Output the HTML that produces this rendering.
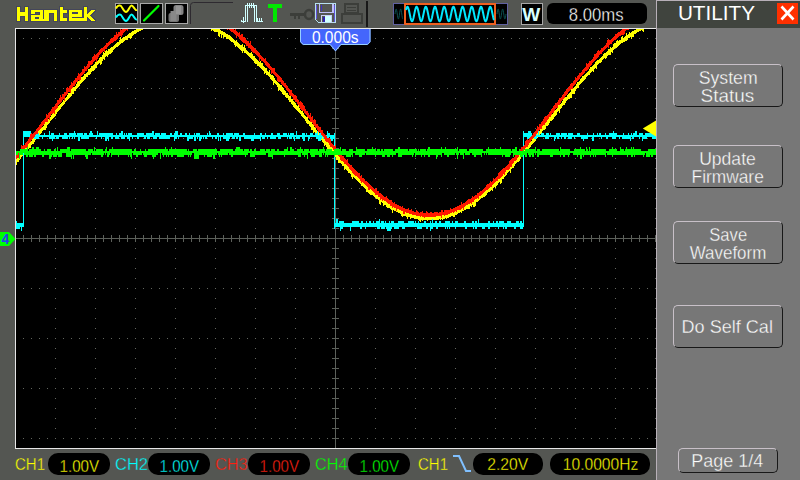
<!DOCTYPE html>
<html><head><meta charset="utf-8">
<style>
html,body{margin:0;padding:0;}
body{width:800px;height:480px;overflow:hidden;background:#545652;position:relative;font-family:"Liberation Sans",sans-serif;}
.a{position:absolute;}
.t{position:absolute;white-space:nowrap;line-height:1;}
svg{position:absolute;left:0;top:0;}
.pill{position:absolute;background:#000;border-radius:10px;}
.btn{position:absolute;left:673px;width:108px;border-style:solid;border-width:1px;border-color:#c8c0c8 #181818 #181818 #c8c0c8;border-radius:5px;color:#fff;text-align:center;font-size:17px;}
.btn span{position:absolute;left:0;right:0;text-align:center;line-height:1;}
</style></head>
<body>
<svg width="800" height="480" viewBox="0 0 800 480" shape-rendering="crispEdges">
  <!-- plot background -->
  <rect x="15" y="28" width="641" height="421" fill="#e6e6e6"/>
  <rect x="16" y="29" width="640" height="419" fill="#000"/>
  <path d="M23 38h1v1h-1zM31 38h1v1h-1zM39 38h1v1h-1zM47 38h1v1h-1zM55 38h1v1h-1zM63 38h1v1h-1zM71 38h1v1h-1zM79 38h1v1h-1zM87 38h1v1h-1zM95 38h1v1h-1zM103 38h1v1h-1zM111 38h1v1h-1zM119 38h1v1h-1zM127 38h1v1h-1zM135 38h1v1h-1zM143 38h1v1h-1zM151 38h1v1h-1zM159 38h1v1h-1zM167 38h1v1h-1zM175 38h1v1h-1zM183 38h1v1h-1zM191 38h1v1h-1zM199 38h1v1h-1zM207 38h1v1h-1zM215 38h1v1h-1zM223 38h1v1h-1zM231 38h1v1h-1zM239 38h1v1h-1zM247 38h1v1h-1zM255 38h1v1h-1zM263 38h1v1h-1zM271 38h1v1h-1zM279 38h1v1h-1zM287 38h1v1h-1zM295 38h1v1h-1zM303 38h1v1h-1zM311 38h1v1h-1zM319 38h1v1h-1zM327 38h1v1h-1zM335 38h1v1h-1zM343 38h1v1h-1zM351 38h1v1h-1zM359 38h1v1h-1zM367 38h1v1h-1zM375 38h1v1h-1zM383 38h1v1h-1zM391 38h1v1h-1zM399 38h1v1h-1zM407 38h1v1h-1zM415 38h1v1h-1zM423 38h1v1h-1zM431 38h1v1h-1zM439 38h1v1h-1zM447 38h1v1h-1zM455 38h1v1h-1zM463 38h1v1h-1zM471 38h1v1h-1zM479 38h1v1h-1zM487 38h1v1h-1zM495 38h1v1h-1zM503 38h1v1h-1zM511 38h1v1h-1zM519 38h1v1h-1zM527 38h1v1h-1zM535 38h1v1h-1zM543 38h1v1h-1zM551 38h1v1h-1zM559 38h1v1h-1zM567 38h1v1h-1zM575 38h1v1h-1zM583 38h1v1h-1zM591 38h1v1h-1zM599 38h1v1h-1zM607 38h1v1h-1zM615 38h1v1h-1zM623 38h1v1h-1zM631 38h1v1h-1zM639 38h1v1h-1zM647 38h1v1h-1zM655 38h1v1h-1zM23 88h1v1h-1zM31 88h1v1h-1zM39 88h1v1h-1zM47 88h1v1h-1zM55 88h1v1h-1zM63 88h1v1h-1zM71 88h1v1h-1zM79 88h1v1h-1zM87 88h1v1h-1zM95 88h1v1h-1zM103 88h1v1h-1zM111 88h1v1h-1zM119 88h1v1h-1zM127 88h1v1h-1zM135 88h1v1h-1zM143 88h1v1h-1zM151 88h1v1h-1zM159 88h1v1h-1zM167 88h1v1h-1zM175 88h1v1h-1zM183 88h1v1h-1zM191 88h1v1h-1zM199 88h1v1h-1zM207 88h1v1h-1zM215 88h1v1h-1zM223 88h1v1h-1zM231 88h1v1h-1zM239 88h1v1h-1zM247 88h1v1h-1zM255 88h1v1h-1zM263 88h1v1h-1zM271 88h1v1h-1zM279 88h1v1h-1zM287 88h1v1h-1zM295 88h1v1h-1zM303 88h1v1h-1zM311 88h1v1h-1zM319 88h1v1h-1zM327 88h1v1h-1zM335 88h1v1h-1zM343 88h1v1h-1zM351 88h1v1h-1zM359 88h1v1h-1zM367 88h1v1h-1zM375 88h1v1h-1zM383 88h1v1h-1zM391 88h1v1h-1zM399 88h1v1h-1zM407 88h1v1h-1zM415 88h1v1h-1zM423 88h1v1h-1zM431 88h1v1h-1zM439 88h1v1h-1zM447 88h1v1h-1zM455 88h1v1h-1zM463 88h1v1h-1zM471 88h1v1h-1zM479 88h1v1h-1zM487 88h1v1h-1zM495 88h1v1h-1zM503 88h1v1h-1zM511 88h1v1h-1zM519 88h1v1h-1zM527 88h1v1h-1zM535 88h1v1h-1zM543 88h1v1h-1zM551 88h1v1h-1zM559 88h1v1h-1zM567 88h1v1h-1zM575 88h1v1h-1zM583 88h1v1h-1zM591 88h1v1h-1zM599 88h1v1h-1zM607 88h1v1h-1zM615 88h1v1h-1zM623 88h1v1h-1zM631 88h1v1h-1zM639 88h1v1h-1zM647 88h1v1h-1zM655 88h1v1h-1zM23 138h1v1h-1zM31 138h1v1h-1zM39 138h1v1h-1zM47 138h1v1h-1zM55 138h1v1h-1zM63 138h1v1h-1zM71 138h1v1h-1zM79 138h1v1h-1zM87 138h1v1h-1zM95 138h1v1h-1zM103 138h1v1h-1zM111 138h1v1h-1zM119 138h1v1h-1zM127 138h1v1h-1zM135 138h1v1h-1zM143 138h1v1h-1zM151 138h1v1h-1zM159 138h1v1h-1zM167 138h1v1h-1zM175 138h1v1h-1zM183 138h1v1h-1zM191 138h1v1h-1zM199 138h1v1h-1zM207 138h1v1h-1zM215 138h1v1h-1zM223 138h1v1h-1zM231 138h1v1h-1zM239 138h1v1h-1zM247 138h1v1h-1zM255 138h1v1h-1zM263 138h1v1h-1zM271 138h1v1h-1zM279 138h1v1h-1zM287 138h1v1h-1zM295 138h1v1h-1zM303 138h1v1h-1zM311 138h1v1h-1zM319 138h1v1h-1zM327 138h1v1h-1zM335 138h1v1h-1zM343 138h1v1h-1zM351 138h1v1h-1zM359 138h1v1h-1zM367 138h1v1h-1zM375 138h1v1h-1zM383 138h1v1h-1zM391 138h1v1h-1zM399 138h1v1h-1zM407 138h1v1h-1zM415 138h1v1h-1zM423 138h1v1h-1zM431 138h1v1h-1zM439 138h1v1h-1zM447 138h1v1h-1zM455 138h1v1h-1zM463 138h1v1h-1zM471 138h1v1h-1zM479 138h1v1h-1zM487 138h1v1h-1zM495 138h1v1h-1zM503 138h1v1h-1zM511 138h1v1h-1zM519 138h1v1h-1zM527 138h1v1h-1zM535 138h1v1h-1zM543 138h1v1h-1zM551 138h1v1h-1zM559 138h1v1h-1zM567 138h1v1h-1zM575 138h1v1h-1zM583 138h1v1h-1zM591 138h1v1h-1zM599 138h1v1h-1zM607 138h1v1h-1zM615 138h1v1h-1zM623 138h1v1h-1zM631 138h1v1h-1zM639 138h1v1h-1zM647 138h1v1h-1zM655 138h1v1h-1zM23 188h1v1h-1zM31 188h1v1h-1zM39 188h1v1h-1zM47 188h1v1h-1zM55 188h1v1h-1zM63 188h1v1h-1zM71 188h1v1h-1zM79 188h1v1h-1zM87 188h1v1h-1zM95 188h1v1h-1zM103 188h1v1h-1zM111 188h1v1h-1zM119 188h1v1h-1zM127 188h1v1h-1zM135 188h1v1h-1zM143 188h1v1h-1zM151 188h1v1h-1zM159 188h1v1h-1zM167 188h1v1h-1zM175 188h1v1h-1zM183 188h1v1h-1zM191 188h1v1h-1zM199 188h1v1h-1zM207 188h1v1h-1zM215 188h1v1h-1zM223 188h1v1h-1zM231 188h1v1h-1zM239 188h1v1h-1zM247 188h1v1h-1zM255 188h1v1h-1zM263 188h1v1h-1zM271 188h1v1h-1zM279 188h1v1h-1zM287 188h1v1h-1zM295 188h1v1h-1zM303 188h1v1h-1zM311 188h1v1h-1zM319 188h1v1h-1zM327 188h1v1h-1zM335 188h1v1h-1zM343 188h1v1h-1zM351 188h1v1h-1zM359 188h1v1h-1zM367 188h1v1h-1zM375 188h1v1h-1zM383 188h1v1h-1zM391 188h1v1h-1zM399 188h1v1h-1zM407 188h1v1h-1zM415 188h1v1h-1zM423 188h1v1h-1zM431 188h1v1h-1zM439 188h1v1h-1zM447 188h1v1h-1zM455 188h1v1h-1zM463 188h1v1h-1zM471 188h1v1h-1zM479 188h1v1h-1zM487 188h1v1h-1zM495 188h1v1h-1zM503 188h1v1h-1zM511 188h1v1h-1zM519 188h1v1h-1zM527 188h1v1h-1zM535 188h1v1h-1zM543 188h1v1h-1zM551 188h1v1h-1zM559 188h1v1h-1zM567 188h1v1h-1zM575 188h1v1h-1zM583 188h1v1h-1zM591 188h1v1h-1zM599 188h1v1h-1zM607 188h1v1h-1zM615 188h1v1h-1zM623 188h1v1h-1zM631 188h1v1h-1zM639 188h1v1h-1zM647 188h1v1h-1zM655 188h1v1h-1zM23 238h1v1h-1zM31 238h1v1h-1zM39 238h1v1h-1zM47 238h1v1h-1zM55 238h1v1h-1zM63 238h1v1h-1zM71 238h1v1h-1zM79 238h1v1h-1zM87 238h1v1h-1zM95 238h1v1h-1zM103 238h1v1h-1zM111 238h1v1h-1zM119 238h1v1h-1zM127 238h1v1h-1zM135 238h1v1h-1zM143 238h1v1h-1zM151 238h1v1h-1zM159 238h1v1h-1zM167 238h1v1h-1zM175 238h1v1h-1zM183 238h1v1h-1zM191 238h1v1h-1zM199 238h1v1h-1zM207 238h1v1h-1zM215 238h1v1h-1zM223 238h1v1h-1zM231 238h1v1h-1zM239 238h1v1h-1zM247 238h1v1h-1zM255 238h1v1h-1zM263 238h1v1h-1zM271 238h1v1h-1zM279 238h1v1h-1zM287 238h1v1h-1zM295 238h1v1h-1zM303 238h1v1h-1zM311 238h1v1h-1zM319 238h1v1h-1zM327 238h1v1h-1zM335 238h1v1h-1zM343 238h1v1h-1zM351 238h1v1h-1zM359 238h1v1h-1zM367 238h1v1h-1zM375 238h1v1h-1zM383 238h1v1h-1zM391 238h1v1h-1zM399 238h1v1h-1zM407 238h1v1h-1zM415 238h1v1h-1zM423 238h1v1h-1zM431 238h1v1h-1zM439 238h1v1h-1zM447 238h1v1h-1zM455 238h1v1h-1zM463 238h1v1h-1zM471 238h1v1h-1zM479 238h1v1h-1zM487 238h1v1h-1zM495 238h1v1h-1zM503 238h1v1h-1zM511 238h1v1h-1zM519 238h1v1h-1zM527 238h1v1h-1zM535 238h1v1h-1zM543 238h1v1h-1zM551 238h1v1h-1zM559 238h1v1h-1zM567 238h1v1h-1zM575 238h1v1h-1zM583 238h1v1h-1zM591 238h1v1h-1zM599 238h1v1h-1zM607 238h1v1h-1zM615 238h1v1h-1zM623 238h1v1h-1zM631 238h1v1h-1zM639 238h1v1h-1zM647 238h1v1h-1zM655 238h1v1h-1zM23 288h1v1h-1zM31 288h1v1h-1zM39 288h1v1h-1zM47 288h1v1h-1zM55 288h1v1h-1zM63 288h1v1h-1zM71 288h1v1h-1zM79 288h1v1h-1zM87 288h1v1h-1zM95 288h1v1h-1zM103 288h1v1h-1zM111 288h1v1h-1zM119 288h1v1h-1zM127 288h1v1h-1zM135 288h1v1h-1zM143 288h1v1h-1zM151 288h1v1h-1zM159 288h1v1h-1zM167 288h1v1h-1zM175 288h1v1h-1zM183 288h1v1h-1zM191 288h1v1h-1zM199 288h1v1h-1zM207 288h1v1h-1zM215 288h1v1h-1zM223 288h1v1h-1zM231 288h1v1h-1zM239 288h1v1h-1zM247 288h1v1h-1zM255 288h1v1h-1zM263 288h1v1h-1zM271 288h1v1h-1zM279 288h1v1h-1zM287 288h1v1h-1zM295 288h1v1h-1zM303 288h1v1h-1zM311 288h1v1h-1zM319 288h1v1h-1zM327 288h1v1h-1zM335 288h1v1h-1zM343 288h1v1h-1zM351 288h1v1h-1zM359 288h1v1h-1zM367 288h1v1h-1zM375 288h1v1h-1zM383 288h1v1h-1zM391 288h1v1h-1zM399 288h1v1h-1zM407 288h1v1h-1zM415 288h1v1h-1zM423 288h1v1h-1zM431 288h1v1h-1zM439 288h1v1h-1zM447 288h1v1h-1zM455 288h1v1h-1zM463 288h1v1h-1zM471 288h1v1h-1zM479 288h1v1h-1zM487 288h1v1h-1zM495 288h1v1h-1zM503 288h1v1h-1zM511 288h1v1h-1zM519 288h1v1h-1zM527 288h1v1h-1zM535 288h1v1h-1zM543 288h1v1h-1zM551 288h1v1h-1zM559 288h1v1h-1zM567 288h1v1h-1zM575 288h1v1h-1zM583 288h1v1h-1zM591 288h1v1h-1zM599 288h1v1h-1zM607 288h1v1h-1zM615 288h1v1h-1zM623 288h1v1h-1zM631 288h1v1h-1zM639 288h1v1h-1zM647 288h1v1h-1zM655 288h1v1h-1zM23 338h1v1h-1zM31 338h1v1h-1zM39 338h1v1h-1zM47 338h1v1h-1zM55 338h1v1h-1zM63 338h1v1h-1zM71 338h1v1h-1zM79 338h1v1h-1zM87 338h1v1h-1zM95 338h1v1h-1zM103 338h1v1h-1zM111 338h1v1h-1zM119 338h1v1h-1zM127 338h1v1h-1zM135 338h1v1h-1zM143 338h1v1h-1zM151 338h1v1h-1zM159 338h1v1h-1zM167 338h1v1h-1zM175 338h1v1h-1zM183 338h1v1h-1zM191 338h1v1h-1zM199 338h1v1h-1zM207 338h1v1h-1zM215 338h1v1h-1zM223 338h1v1h-1zM231 338h1v1h-1zM239 338h1v1h-1zM247 338h1v1h-1zM255 338h1v1h-1zM263 338h1v1h-1zM271 338h1v1h-1zM279 338h1v1h-1zM287 338h1v1h-1zM295 338h1v1h-1zM303 338h1v1h-1zM311 338h1v1h-1zM319 338h1v1h-1zM327 338h1v1h-1zM335 338h1v1h-1zM343 338h1v1h-1zM351 338h1v1h-1zM359 338h1v1h-1zM367 338h1v1h-1zM375 338h1v1h-1zM383 338h1v1h-1zM391 338h1v1h-1zM399 338h1v1h-1zM407 338h1v1h-1zM415 338h1v1h-1zM423 338h1v1h-1zM431 338h1v1h-1zM439 338h1v1h-1zM447 338h1v1h-1zM455 338h1v1h-1zM463 338h1v1h-1zM471 338h1v1h-1zM479 338h1v1h-1zM487 338h1v1h-1zM495 338h1v1h-1zM503 338h1v1h-1zM511 338h1v1h-1zM519 338h1v1h-1zM527 338h1v1h-1zM535 338h1v1h-1zM543 338h1v1h-1zM551 338h1v1h-1zM559 338h1v1h-1zM567 338h1v1h-1zM575 338h1v1h-1zM583 338h1v1h-1zM591 338h1v1h-1zM599 338h1v1h-1zM607 338h1v1h-1zM615 338h1v1h-1zM623 338h1v1h-1zM631 338h1v1h-1zM639 338h1v1h-1zM647 338h1v1h-1zM655 338h1v1h-1zM23 388h1v1h-1zM31 388h1v1h-1zM39 388h1v1h-1zM47 388h1v1h-1zM55 388h1v1h-1zM63 388h1v1h-1zM71 388h1v1h-1zM79 388h1v1h-1zM87 388h1v1h-1zM95 388h1v1h-1zM103 388h1v1h-1zM111 388h1v1h-1zM119 388h1v1h-1zM127 388h1v1h-1zM135 388h1v1h-1zM143 388h1v1h-1zM151 388h1v1h-1zM159 388h1v1h-1zM167 388h1v1h-1zM175 388h1v1h-1zM183 388h1v1h-1zM191 388h1v1h-1zM199 388h1v1h-1zM207 388h1v1h-1zM215 388h1v1h-1zM223 388h1v1h-1zM231 388h1v1h-1zM239 388h1v1h-1zM247 388h1v1h-1zM255 388h1v1h-1zM263 388h1v1h-1zM271 388h1v1h-1zM279 388h1v1h-1zM287 388h1v1h-1zM295 388h1v1h-1zM303 388h1v1h-1zM311 388h1v1h-1zM319 388h1v1h-1zM327 388h1v1h-1zM335 388h1v1h-1zM343 388h1v1h-1zM351 388h1v1h-1zM359 388h1v1h-1zM367 388h1v1h-1zM375 388h1v1h-1zM383 388h1v1h-1zM391 388h1v1h-1zM399 388h1v1h-1zM407 388h1v1h-1zM415 388h1v1h-1zM423 388h1v1h-1zM431 388h1v1h-1zM439 388h1v1h-1zM447 388h1v1h-1zM455 388h1v1h-1zM463 388h1v1h-1zM471 388h1v1h-1zM479 388h1v1h-1zM487 388h1v1h-1zM495 388h1v1h-1zM503 388h1v1h-1zM511 388h1v1h-1zM519 388h1v1h-1zM527 388h1v1h-1zM535 388h1v1h-1zM543 388h1v1h-1zM551 388h1v1h-1zM559 388h1v1h-1zM567 388h1v1h-1zM575 388h1v1h-1zM583 388h1v1h-1zM591 388h1v1h-1zM599 388h1v1h-1zM607 388h1v1h-1zM615 388h1v1h-1zM623 388h1v1h-1zM631 388h1v1h-1zM639 388h1v1h-1zM647 388h1v1h-1zM655 388h1v1h-1zM23 438h1v1h-1zM31 438h1v1h-1zM39 438h1v1h-1zM47 438h1v1h-1zM55 438h1v1h-1zM63 438h1v1h-1zM71 438h1v1h-1zM79 438h1v1h-1zM87 438h1v1h-1zM95 438h1v1h-1zM103 438h1v1h-1zM111 438h1v1h-1zM119 438h1v1h-1zM127 438h1v1h-1zM135 438h1v1h-1zM143 438h1v1h-1zM151 438h1v1h-1zM159 438h1v1h-1zM167 438h1v1h-1zM175 438h1v1h-1zM183 438h1v1h-1zM191 438h1v1h-1zM199 438h1v1h-1zM207 438h1v1h-1zM215 438h1v1h-1zM223 438h1v1h-1zM231 438h1v1h-1zM239 438h1v1h-1zM247 438h1v1h-1zM255 438h1v1h-1zM263 438h1v1h-1zM271 438h1v1h-1zM279 438h1v1h-1zM287 438h1v1h-1zM295 438h1v1h-1zM303 438h1v1h-1zM311 438h1v1h-1zM319 438h1v1h-1zM327 438h1v1h-1zM335 438h1v1h-1zM343 438h1v1h-1zM351 438h1v1h-1zM359 438h1v1h-1zM367 438h1v1h-1zM375 438h1v1h-1zM383 438h1v1h-1zM391 438h1v1h-1zM399 438h1v1h-1zM407 438h1v1h-1zM415 438h1v1h-1zM423 438h1v1h-1zM431 438h1v1h-1zM439 438h1v1h-1zM447 438h1v1h-1zM455 438h1v1h-1zM463 438h1v1h-1zM471 438h1v1h-1zM479 438h1v1h-1zM487 438h1v1h-1zM495 438h1v1h-1zM503 438h1v1h-1zM511 438h1v1h-1zM519 438h1v1h-1zM527 438h1v1h-1zM535 438h1v1h-1zM543 438h1v1h-1zM551 438h1v1h-1zM559 438h1v1h-1zM567 438h1v1h-1zM575 438h1v1h-1zM583 438h1v1h-1zM591 438h1v1h-1zM599 438h1v1h-1zM607 438h1v1h-1zM615 438h1v1h-1zM623 438h1v1h-1zM631 438h1v1h-1zM639 438h1v1h-1zM647 438h1v1h-1zM655 438h1v1h-1zM55 38h1v1h-1zM55 48h1v1h-1zM55 58h1v1h-1zM55 68h1v1h-1zM55 78h1v1h-1zM55 88h1v1h-1zM55 98h1v1h-1zM55 108h1v1h-1zM55 118h1v1h-1zM55 128h1v1h-1zM55 138h1v1h-1zM55 148h1v1h-1zM55 158h1v1h-1zM55 168h1v1h-1zM55 178h1v1h-1zM55 188h1v1h-1zM55 198h1v1h-1zM55 208h1v1h-1zM55 218h1v1h-1zM55 228h1v1h-1zM55 238h1v1h-1zM55 248h1v1h-1zM55 258h1v1h-1zM55 268h1v1h-1zM55 278h1v1h-1zM55 288h1v1h-1zM55 298h1v1h-1zM55 308h1v1h-1zM55 318h1v1h-1zM55 328h1v1h-1zM55 338h1v1h-1zM55 348h1v1h-1zM55 358h1v1h-1zM55 368h1v1h-1zM55 378h1v1h-1zM55 388h1v1h-1zM55 398h1v1h-1zM55 408h1v1h-1zM55 418h1v1h-1zM55 428h1v1h-1zM55 438h1v1h-1zM95 38h1v1h-1zM95 48h1v1h-1zM95 58h1v1h-1zM95 68h1v1h-1zM95 78h1v1h-1zM95 88h1v1h-1zM95 98h1v1h-1zM95 108h1v1h-1zM95 118h1v1h-1zM95 128h1v1h-1zM95 138h1v1h-1zM95 148h1v1h-1zM95 158h1v1h-1zM95 168h1v1h-1zM95 178h1v1h-1zM95 188h1v1h-1zM95 198h1v1h-1zM95 208h1v1h-1zM95 218h1v1h-1zM95 228h1v1h-1zM95 238h1v1h-1zM95 248h1v1h-1zM95 258h1v1h-1zM95 268h1v1h-1zM95 278h1v1h-1zM95 288h1v1h-1zM95 298h1v1h-1zM95 308h1v1h-1zM95 318h1v1h-1zM95 328h1v1h-1zM95 338h1v1h-1zM95 348h1v1h-1zM95 358h1v1h-1zM95 368h1v1h-1zM95 378h1v1h-1zM95 388h1v1h-1zM95 398h1v1h-1zM95 408h1v1h-1zM95 418h1v1h-1zM95 428h1v1h-1zM95 438h1v1h-1zM135 38h1v1h-1zM135 48h1v1h-1zM135 58h1v1h-1zM135 68h1v1h-1zM135 78h1v1h-1zM135 88h1v1h-1zM135 98h1v1h-1zM135 108h1v1h-1zM135 118h1v1h-1zM135 128h1v1h-1zM135 138h1v1h-1zM135 148h1v1h-1zM135 158h1v1h-1zM135 168h1v1h-1zM135 178h1v1h-1zM135 188h1v1h-1zM135 198h1v1h-1zM135 208h1v1h-1zM135 218h1v1h-1zM135 228h1v1h-1zM135 238h1v1h-1zM135 248h1v1h-1zM135 258h1v1h-1zM135 268h1v1h-1zM135 278h1v1h-1zM135 288h1v1h-1zM135 298h1v1h-1zM135 308h1v1h-1zM135 318h1v1h-1zM135 328h1v1h-1zM135 338h1v1h-1zM135 348h1v1h-1zM135 358h1v1h-1zM135 368h1v1h-1zM135 378h1v1h-1zM135 388h1v1h-1zM135 398h1v1h-1zM135 408h1v1h-1zM135 418h1v1h-1zM135 428h1v1h-1zM135 438h1v1h-1zM175 38h1v1h-1zM175 48h1v1h-1zM175 58h1v1h-1zM175 68h1v1h-1zM175 78h1v1h-1zM175 88h1v1h-1zM175 98h1v1h-1zM175 108h1v1h-1zM175 118h1v1h-1zM175 128h1v1h-1zM175 138h1v1h-1zM175 148h1v1h-1zM175 158h1v1h-1zM175 168h1v1h-1zM175 178h1v1h-1zM175 188h1v1h-1zM175 198h1v1h-1zM175 208h1v1h-1zM175 218h1v1h-1zM175 228h1v1h-1zM175 238h1v1h-1zM175 248h1v1h-1zM175 258h1v1h-1zM175 268h1v1h-1zM175 278h1v1h-1zM175 288h1v1h-1zM175 298h1v1h-1zM175 308h1v1h-1zM175 318h1v1h-1zM175 328h1v1h-1zM175 338h1v1h-1zM175 348h1v1h-1zM175 358h1v1h-1zM175 368h1v1h-1zM175 378h1v1h-1zM175 388h1v1h-1zM175 398h1v1h-1zM175 408h1v1h-1zM175 418h1v1h-1zM175 428h1v1h-1zM175 438h1v1h-1zM215 38h1v1h-1zM215 48h1v1h-1zM215 58h1v1h-1zM215 68h1v1h-1zM215 78h1v1h-1zM215 88h1v1h-1zM215 98h1v1h-1zM215 108h1v1h-1zM215 118h1v1h-1zM215 128h1v1h-1zM215 138h1v1h-1zM215 148h1v1h-1zM215 158h1v1h-1zM215 168h1v1h-1zM215 178h1v1h-1zM215 188h1v1h-1zM215 198h1v1h-1zM215 208h1v1h-1zM215 218h1v1h-1zM215 228h1v1h-1zM215 238h1v1h-1zM215 248h1v1h-1zM215 258h1v1h-1zM215 268h1v1h-1zM215 278h1v1h-1zM215 288h1v1h-1zM215 298h1v1h-1zM215 308h1v1h-1zM215 318h1v1h-1zM215 328h1v1h-1zM215 338h1v1h-1zM215 348h1v1h-1zM215 358h1v1h-1zM215 368h1v1h-1zM215 378h1v1h-1zM215 388h1v1h-1zM215 398h1v1h-1zM215 408h1v1h-1zM215 418h1v1h-1zM215 428h1v1h-1zM215 438h1v1h-1zM255 38h1v1h-1zM255 48h1v1h-1zM255 58h1v1h-1zM255 68h1v1h-1zM255 78h1v1h-1zM255 88h1v1h-1zM255 98h1v1h-1zM255 108h1v1h-1zM255 118h1v1h-1zM255 128h1v1h-1zM255 138h1v1h-1zM255 148h1v1h-1zM255 158h1v1h-1zM255 168h1v1h-1zM255 178h1v1h-1zM255 188h1v1h-1zM255 198h1v1h-1zM255 208h1v1h-1zM255 218h1v1h-1zM255 228h1v1h-1zM255 238h1v1h-1zM255 248h1v1h-1zM255 258h1v1h-1zM255 268h1v1h-1zM255 278h1v1h-1zM255 288h1v1h-1zM255 298h1v1h-1zM255 308h1v1h-1zM255 318h1v1h-1zM255 328h1v1h-1zM255 338h1v1h-1zM255 348h1v1h-1zM255 358h1v1h-1zM255 368h1v1h-1zM255 378h1v1h-1zM255 388h1v1h-1zM255 398h1v1h-1zM255 408h1v1h-1zM255 418h1v1h-1zM255 428h1v1h-1zM255 438h1v1h-1zM295 38h1v1h-1zM295 48h1v1h-1zM295 58h1v1h-1zM295 68h1v1h-1zM295 78h1v1h-1zM295 88h1v1h-1zM295 98h1v1h-1zM295 108h1v1h-1zM295 118h1v1h-1zM295 128h1v1h-1zM295 138h1v1h-1zM295 148h1v1h-1zM295 158h1v1h-1zM295 168h1v1h-1zM295 178h1v1h-1zM295 188h1v1h-1zM295 198h1v1h-1zM295 208h1v1h-1zM295 218h1v1h-1zM295 228h1v1h-1zM295 238h1v1h-1zM295 248h1v1h-1zM295 258h1v1h-1zM295 268h1v1h-1zM295 278h1v1h-1zM295 288h1v1h-1zM295 298h1v1h-1zM295 308h1v1h-1zM295 318h1v1h-1zM295 328h1v1h-1zM295 338h1v1h-1zM295 348h1v1h-1zM295 358h1v1h-1zM295 368h1v1h-1zM295 378h1v1h-1zM295 388h1v1h-1zM295 398h1v1h-1zM295 408h1v1h-1zM295 418h1v1h-1zM295 428h1v1h-1zM295 438h1v1h-1zM335 38h1v1h-1zM335 48h1v1h-1zM335 58h1v1h-1zM335 68h1v1h-1zM335 78h1v1h-1zM335 88h1v1h-1zM335 98h1v1h-1zM335 108h1v1h-1zM335 118h1v1h-1zM335 128h1v1h-1zM335 138h1v1h-1zM335 148h1v1h-1zM335 158h1v1h-1zM335 168h1v1h-1zM335 178h1v1h-1zM335 188h1v1h-1zM335 198h1v1h-1zM335 208h1v1h-1zM335 218h1v1h-1zM335 228h1v1h-1zM335 238h1v1h-1zM335 248h1v1h-1zM335 258h1v1h-1zM335 268h1v1h-1zM335 278h1v1h-1zM335 288h1v1h-1zM335 298h1v1h-1zM335 308h1v1h-1zM335 318h1v1h-1zM335 328h1v1h-1zM335 338h1v1h-1zM335 348h1v1h-1zM335 358h1v1h-1zM335 368h1v1h-1zM335 378h1v1h-1zM335 388h1v1h-1zM335 398h1v1h-1zM335 408h1v1h-1zM335 418h1v1h-1zM335 428h1v1h-1zM335 438h1v1h-1zM375 38h1v1h-1zM375 48h1v1h-1zM375 58h1v1h-1zM375 68h1v1h-1zM375 78h1v1h-1zM375 88h1v1h-1zM375 98h1v1h-1zM375 108h1v1h-1zM375 118h1v1h-1zM375 128h1v1h-1zM375 138h1v1h-1zM375 148h1v1h-1zM375 158h1v1h-1zM375 168h1v1h-1zM375 178h1v1h-1zM375 188h1v1h-1zM375 198h1v1h-1zM375 208h1v1h-1zM375 218h1v1h-1zM375 228h1v1h-1zM375 238h1v1h-1zM375 248h1v1h-1zM375 258h1v1h-1zM375 268h1v1h-1zM375 278h1v1h-1zM375 288h1v1h-1zM375 298h1v1h-1zM375 308h1v1h-1zM375 318h1v1h-1zM375 328h1v1h-1zM375 338h1v1h-1zM375 348h1v1h-1zM375 358h1v1h-1zM375 368h1v1h-1zM375 378h1v1h-1zM375 388h1v1h-1zM375 398h1v1h-1zM375 408h1v1h-1zM375 418h1v1h-1zM375 428h1v1h-1zM375 438h1v1h-1zM415 38h1v1h-1zM415 48h1v1h-1zM415 58h1v1h-1zM415 68h1v1h-1zM415 78h1v1h-1zM415 88h1v1h-1zM415 98h1v1h-1zM415 108h1v1h-1zM415 118h1v1h-1zM415 128h1v1h-1zM415 138h1v1h-1zM415 148h1v1h-1zM415 158h1v1h-1zM415 168h1v1h-1zM415 178h1v1h-1zM415 188h1v1h-1zM415 198h1v1h-1zM415 208h1v1h-1zM415 218h1v1h-1zM415 228h1v1h-1zM415 238h1v1h-1zM415 248h1v1h-1zM415 258h1v1h-1zM415 268h1v1h-1zM415 278h1v1h-1zM415 288h1v1h-1zM415 298h1v1h-1zM415 308h1v1h-1zM415 318h1v1h-1zM415 328h1v1h-1zM415 338h1v1h-1zM415 348h1v1h-1zM415 358h1v1h-1zM415 368h1v1h-1zM415 378h1v1h-1zM415 388h1v1h-1zM415 398h1v1h-1zM415 408h1v1h-1zM415 418h1v1h-1zM415 428h1v1h-1zM415 438h1v1h-1zM455 38h1v1h-1zM455 48h1v1h-1zM455 58h1v1h-1zM455 68h1v1h-1zM455 78h1v1h-1zM455 88h1v1h-1zM455 98h1v1h-1zM455 108h1v1h-1zM455 118h1v1h-1zM455 128h1v1h-1zM455 138h1v1h-1zM455 148h1v1h-1zM455 158h1v1h-1zM455 168h1v1h-1zM455 178h1v1h-1zM455 188h1v1h-1zM455 198h1v1h-1zM455 208h1v1h-1zM455 218h1v1h-1zM455 228h1v1h-1zM455 238h1v1h-1zM455 248h1v1h-1zM455 258h1v1h-1zM455 268h1v1h-1zM455 278h1v1h-1zM455 288h1v1h-1zM455 298h1v1h-1zM455 308h1v1h-1zM455 318h1v1h-1zM455 328h1v1h-1zM455 338h1v1h-1zM455 348h1v1h-1zM455 358h1v1h-1zM455 368h1v1h-1zM455 378h1v1h-1zM455 388h1v1h-1zM455 398h1v1h-1zM455 408h1v1h-1zM455 418h1v1h-1zM455 428h1v1h-1zM455 438h1v1h-1zM495 38h1v1h-1zM495 48h1v1h-1zM495 58h1v1h-1zM495 68h1v1h-1zM495 78h1v1h-1zM495 88h1v1h-1zM495 98h1v1h-1zM495 108h1v1h-1zM495 118h1v1h-1zM495 128h1v1h-1zM495 138h1v1h-1zM495 148h1v1h-1zM495 158h1v1h-1zM495 168h1v1h-1zM495 178h1v1h-1zM495 188h1v1h-1zM495 198h1v1h-1zM495 208h1v1h-1zM495 218h1v1h-1zM495 228h1v1h-1zM495 238h1v1h-1zM495 248h1v1h-1zM495 258h1v1h-1zM495 268h1v1h-1zM495 278h1v1h-1zM495 288h1v1h-1zM495 298h1v1h-1zM495 308h1v1h-1zM495 318h1v1h-1zM495 328h1v1h-1zM495 338h1v1h-1zM495 348h1v1h-1zM495 358h1v1h-1zM495 368h1v1h-1zM495 378h1v1h-1zM495 388h1v1h-1zM495 398h1v1h-1zM495 408h1v1h-1zM495 418h1v1h-1zM495 428h1v1h-1zM495 438h1v1h-1zM535 38h1v1h-1zM535 48h1v1h-1zM535 58h1v1h-1zM535 68h1v1h-1zM535 78h1v1h-1zM535 88h1v1h-1zM535 98h1v1h-1zM535 108h1v1h-1zM535 118h1v1h-1zM535 128h1v1h-1zM535 138h1v1h-1zM535 148h1v1h-1zM535 158h1v1h-1zM535 168h1v1h-1zM535 178h1v1h-1zM535 188h1v1h-1zM535 198h1v1h-1zM535 208h1v1h-1zM535 218h1v1h-1zM535 228h1v1h-1zM535 238h1v1h-1zM535 248h1v1h-1zM535 258h1v1h-1zM535 268h1v1h-1zM535 278h1v1h-1zM535 288h1v1h-1zM535 298h1v1h-1zM535 308h1v1h-1zM535 318h1v1h-1zM535 328h1v1h-1zM535 338h1v1h-1zM535 348h1v1h-1zM535 358h1v1h-1zM535 368h1v1h-1zM535 378h1v1h-1zM535 388h1v1h-1zM535 398h1v1h-1zM535 408h1v1h-1zM535 418h1v1h-1zM535 428h1v1h-1zM535 438h1v1h-1zM575 38h1v1h-1zM575 48h1v1h-1zM575 58h1v1h-1zM575 68h1v1h-1zM575 78h1v1h-1zM575 88h1v1h-1zM575 98h1v1h-1zM575 108h1v1h-1zM575 118h1v1h-1zM575 128h1v1h-1zM575 138h1v1h-1zM575 148h1v1h-1zM575 158h1v1h-1zM575 168h1v1h-1zM575 178h1v1h-1zM575 188h1v1h-1zM575 198h1v1h-1zM575 208h1v1h-1zM575 218h1v1h-1zM575 228h1v1h-1zM575 238h1v1h-1zM575 248h1v1h-1zM575 258h1v1h-1zM575 268h1v1h-1zM575 278h1v1h-1zM575 288h1v1h-1zM575 298h1v1h-1zM575 308h1v1h-1zM575 318h1v1h-1zM575 328h1v1h-1zM575 338h1v1h-1zM575 348h1v1h-1zM575 358h1v1h-1zM575 368h1v1h-1zM575 378h1v1h-1zM575 388h1v1h-1zM575 398h1v1h-1zM575 408h1v1h-1zM575 418h1v1h-1zM575 428h1v1h-1zM575 438h1v1h-1zM615 38h1v1h-1zM615 48h1v1h-1zM615 58h1v1h-1zM615 68h1v1h-1zM615 78h1v1h-1zM615 88h1v1h-1zM615 98h1v1h-1zM615 108h1v1h-1zM615 118h1v1h-1zM615 128h1v1h-1zM615 138h1v1h-1zM615 148h1v1h-1zM615 158h1v1h-1zM615 168h1v1h-1zM615 178h1v1h-1zM615 188h1v1h-1zM615 198h1v1h-1zM615 208h1v1h-1zM615 218h1v1h-1zM615 228h1v1h-1zM615 238h1v1h-1zM615 248h1v1h-1zM615 258h1v1h-1zM615 268h1v1h-1zM615 278h1v1h-1zM615 288h1v1h-1zM615 298h1v1h-1zM615 308h1v1h-1zM615 318h1v1h-1zM615 328h1v1h-1zM615 338h1v1h-1zM615 348h1v1h-1zM615 358h1v1h-1zM615 368h1v1h-1zM615 378h1v1h-1zM615 388h1v1h-1zM615 398h1v1h-1zM615 408h1v1h-1zM615 418h1v1h-1zM615 428h1v1h-1zM615 438h1v1h-1zM655 38h1v1h-1zM655 48h1v1h-1zM655 58h1v1h-1zM655 68h1v1h-1zM655 78h1v1h-1zM655 88h1v1h-1zM655 98h1v1h-1zM655 108h1v1h-1zM655 118h1v1h-1zM655 128h1v1h-1zM655 138h1v1h-1zM655 148h1v1h-1zM655 158h1v1h-1zM655 168h1v1h-1zM655 178h1v1h-1zM655 188h1v1h-1zM655 198h1v1h-1zM655 208h1v1h-1zM655 218h1v1h-1zM655 228h1v1h-1zM655 238h1v1h-1zM655 248h1v1h-1zM655 258h1v1h-1zM655 268h1v1h-1zM655 278h1v1h-1zM655 288h1v1h-1zM655 298h1v1h-1zM655 308h1v1h-1zM655 318h1v1h-1zM655 328h1v1h-1zM655 338h1v1h-1zM655 348h1v1h-1zM655 358h1v1h-1zM655 368h1v1h-1zM655 378h1v1h-1zM655 388h1v1h-1zM655 398h1v1h-1zM655 408h1v1h-1zM655 418h1v1h-1zM655 428h1v1h-1zM655 438h1v1h-1z" fill="#62665f"/>
  <path d="M335 29h1v419h-1zM16 238h640v1h-640zM332 38h7v1h-7zM332 48h7v1h-7zM332 58h7v1h-7zM332 68h7v1h-7zM332 78h7v1h-7zM332 88h7v1h-7zM332 98h7v1h-7zM332 108h7v1h-7zM332 118h7v1h-7zM332 128h7v1h-7zM332 138h7v1h-7zM332 148h7v1h-7zM332 158h7v1h-7zM332 168h7v1h-7zM332 178h7v1h-7zM332 188h7v1h-7zM332 198h7v1h-7zM332 208h7v1h-7zM332 218h7v1h-7zM332 228h7v1h-7zM332 238h7v1h-7zM332 248h7v1h-7zM332 258h7v1h-7zM332 268h7v1h-7zM332 278h7v1h-7zM332 288h7v1h-7zM332 298h7v1h-7zM332 308h7v1h-7zM332 318h7v1h-7zM332 328h7v1h-7zM332 338h7v1h-7zM332 348h7v1h-7zM332 358h7v1h-7zM332 368h7v1h-7zM332 378h7v1h-7zM332 388h7v1h-7zM332 398h7v1h-7zM332 408h7v1h-7zM332 418h7v1h-7zM332 428h7v1h-7zM332 438h7v1h-7zM23 235h1v7h-1zM31 235h1v7h-1zM39 235h1v7h-1zM47 235h1v7h-1zM55 235h1v7h-1zM63 235h1v7h-1zM71 235h1v7h-1zM79 235h1v7h-1zM87 235h1v7h-1zM95 235h1v7h-1zM103 235h1v7h-1zM111 235h1v7h-1zM119 235h1v7h-1zM127 235h1v7h-1zM135 235h1v7h-1zM143 235h1v7h-1zM151 235h1v7h-1zM159 235h1v7h-1zM167 235h1v7h-1zM175 235h1v7h-1zM183 235h1v7h-1zM191 235h1v7h-1zM199 235h1v7h-1zM207 235h1v7h-1zM215 235h1v7h-1zM223 235h1v7h-1zM231 235h1v7h-1zM239 235h1v7h-1zM247 235h1v7h-1zM255 235h1v7h-1zM263 235h1v7h-1zM271 235h1v7h-1zM279 235h1v7h-1zM287 235h1v7h-1zM295 235h1v7h-1zM303 235h1v7h-1zM311 235h1v7h-1zM319 235h1v7h-1zM327 235h1v7h-1zM335 235h1v7h-1zM343 235h1v7h-1zM351 235h1v7h-1zM359 235h1v7h-1zM367 235h1v7h-1zM375 235h1v7h-1zM383 235h1v7h-1zM391 235h1v7h-1zM399 235h1v7h-1zM407 235h1v7h-1zM415 235h1v7h-1zM423 235h1v7h-1zM431 235h1v7h-1zM439 235h1v7h-1zM447 235h1v7h-1zM455 235h1v7h-1zM463 235h1v7h-1zM471 235h1v7h-1zM479 235h1v7h-1zM487 235h1v7h-1zM495 235h1v7h-1zM503 235h1v7h-1zM511 235h1v7h-1zM519 235h1v7h-1zM527 235h1v7h-1zM535 235h1v7h-1zM543 235h1v7h-1zM551 235h1v7h-1zM559 235h1v7h-1zM567 235h1v7h-1zM575 235h1v7h-1zM583 235h1v7h-1zM591 235h1v7h-1zM599 235h1v7h-1zM607 235h1v7h-1zM615 235h1v7h-1zM623 235h1v7h-1zM631 235h1v7h-1zM639 235h1v7h-1zM647 235h1v7h-1zM655 235h1v7h-1z" fill="#5c605a"/>
  <path d="M16 159h1v6h-1zM17 158h1v4h-1zM18 155h1v7h-1zM19 152h1v8h-1zM20 154h1v5h-1zM21 153h1v4h-1zM22 152h1v4h-1zM23 147h1v8h-1zM24 146h1v8h-1zM25 146h1v8h-1zM26 147h1v4h-1zM27 146h1v4h-1zM28 144h1v5h-1zM29 143h1v5h-1zM30 141h1v7h-1zM31 141h1v4h-1zM32 138h1v6h-1zM33 138h1v6h-1zM34 136h1v6h-1zM35 136h1v4h-1zM36 134h1v5h-1zM37 133h1v6h-1zM38 130h1v8h-1zM39 129h1v7h-1zM40 127h1v7h-1zM41 128h1v5h-1zM42 127h1v4h-1zM43 126h1v4h-1zM44 124h1v6h-1zM45 122h1v8h-1zM46 122h1v6h-1zM47 120h1v5h-1zM48 119h1v5h-1zM49 118h1v5h-1zM50 117h1v4h-1zM51 115h1v5h-1zM52 114h1v5h-1zM53 111h1v7h-1zM54 111h1v6h-1zM55 110h1v6h-1zM56 109h1v5h-1zM57 108h1v4h-1zM58 106h1v5h-1zM59 105h1v5h-1zM60 104h1v5h-1zM61 103h1v4h-1zM62 102h1v4h-1zM63 100h1v5h-1zM64 97h1v7h-1zM65 98h1v4h-1zM66 97h1v4h-1zM67 95h1v5h-1zM68 93h1v6h-1zM69 93h1v5h-1zM70 92h1v5h-1zM71 88h1v8h-1zM72 87h1v7h-1zM73 87h1v7h-1zM74 87h1v4h-1zM75 86h1v5h-1zM76 84h1v5h-1zM77 82h1v6h-1zM78 81h1v6h-1zM79 81h1v5h-1zM80 80h1v4h-1zM81 77h1v6h-1zM82 77h1v5h-1zM83 76h1v5h-1zM84 74h1v6h-1zM85 74h1v5h-1zM86 73h1v4h-1zM87 72h1v5h-1zM88 69h1v6h-1zM89 69h1v6h-1zM90 68h1v6h-1zM91 66h1v6h-1zM92 66h1v5h-1zM93 65h1v6h-1zM94 64h1v6h-1zM95 62h1v6h-1zM96 61h1v7h-1zM97 61h1v4h-1zM98 60h1v4h-1zM99 58h1v5h-1zM100 57h1v8h-1zM101 57h1v7h-1zM102 55h1v6h-1zM103 52h1v7h-1zM104 53h1v7h-1zM105 51h1v6h-1zM106 50h1v6h-1zM107 51h1v6h-1zM108 49h1v6h-1zM109 49h1v5h-1zM110 48h1v6h-1zM111 47h1v6h-1zM112 47h1v5h-1zM113 46h1v4h-1zM114 45h1v4h-1zM115 44h1v4h-1zM116 43h1v4h-1zM117 42h1v5h-1zM118 42h1v4h-1zM119 40h1v5h-1zM120 37h1v7h-1zM121 39h1v4h-1zM122 38h1v5h-1zM123 37h1v5h-1zM124 37h1v4h-1zM125 36h1v4h-1zM126 36h1v4h-1zM127 35h1v5h-1zM128 34h1v4h-1zM129 33h1v5h-1zM130 33h1v6h-1zM131 32h1v6h-1zM132 31h1v5h-1zM133 31h1v4h-1zM134 30h1v4h-1zM135 30h1v4h-1zM136 29h1v4h-1zM137 29h1v3h-1zM138 29h1v3h-1zM139 29h1v2h-1zM140 29h1v2h-1zM141 29h1v1h-1zM142 29h1v1h-1zM211 29h1v2h-1zM212 29h1v1h-1zM213 29h1v2h-1zM214 29h1v3h-1zM215 29h1v3h-1zM216 29h1v3h-1zM217 29h1v3h-1zM218 29h1v7h-1zM219 29h1v8h-1zM220 30h1v4h-1zM221 31h1v7h-1zM222 31h1v4h-1zM223 32h1v6h-1zM224 32h1v5h-1zM225 33h1v4h-1zM226 34h1v5h-1zM227 34h1v5h-1zM228 35h1v4h-1zM229 35h1v5h-1zM230 36h1v5h-1zM231 37h1v5h-1zM232 38h1v4h-1zM233 39h1v4h-1zM234 40h1v5h-1zM235 41h1v6h-1zM236 40h1v6h-1zM237 42h1v5h-1zM238 43h1v5h-1zM239 44h1v5h-1zM240 45h1v5h-1zM241 45h1v6h-1zM242 44h1v9h-1zM243 47h1v4h-1zM244 45h1v8h-1zM245 48h1v5h-1zM246 50h1v4h-1zM247 51h1v4h-1zM248 52h1v4h-1zM249 53h1v4h-1zM250 53h1v5h-1zM251 52h1v7h-1zM252 54h1v6h-1zM253 56h1v5h-1zM254 56h1v7h-1zM255 58h1v6h-1zM256 59h1v5h-1zM257 60h1v6h-1zM258 61h1v5h-1zM259 62h1v5h-1zM260 61h1v7h-1zM261 63h1v6h-1zM262 63h1v7h-1zM263 66h1v5h-1zM264 67h1v7h-1zM265 68h1v5h-1zM266 68h1v7h-1zM267 71h1v4h-1zM268 72h1v4h-1zM269 70h1v7h-1zM270 74h1v5h-1zM271 75h1v5h-1zM272 75h1v6h-1zM273 76h1v9h-1zM274 78h1v5h-1zM275 80h1v4h-1zM276 81h1v4h-1zM277 82h1v5h-1zM278 83h1v8h-1zM279 84h1v6h-1zM280 85h1v6h-1zM281 85h1v7h-1zM282 87h1v7h-1zM283 88h1v7h-1zM284 90h1v5h-1zM285 91h1v6h-1zM286 93h1v5h-1zM287 93h1v5h-1zM288 95h1v5h-1zM289 96h1v6h-1zM290 96h1v6h-1zM291 99h1v5h-1zM292 99h1v6h-1zM293 101h1v6h-1zM294 102h1v6h-1zM295 103h1v6h-1zM296 105h1v5h-1zM297 106h1v5h-1zM298 105h1v7h-1zM299 108h1v5h-1zM300 110h1v4h-1zM301 111h1v5h-1zM302 110h1v7h-1zM303 113h1v5h-1zM304 115h1v4h-1zM305 116h1v5h-1zM306 117h1v6h-1zM307 117h1v7h-1zM308 120h1v4h-1zM309 121h1v5h-1zM310 121h1v6h-1zM311 122h1v8h-1zM312 124h1v6h-1zM313 125h1v8h-1zM314 127h1v5h-1zM315 128h1v6h-1zM316 130h1v4h-1zM317 131h1v6h-1zM318 131h1v6h-1zM319 133h1v5h-1zM320 132h1v7h-1zM321 135h1v5h-1zM322 137h1v5h-1zM323 138h1v5h-1zM324 139h1v7h-1zM325 141h1v4h-1zM326 142h1v5h-1zM327 142h1v9h-1zM328 143h1v6h-1zM329 145h1v7h-1zM330 147h1v4h-1zM331 146h1v7h-1zM332 147h1v8h-1zM333 150h1v5h-1zM334 151h1v8h-1zM335 153h1v4h-1zM336 153h1v7h-1zM337 155h1v5h-1zM338 156h1v7h-1zM339 157h1v6h-1zM340 159h1v4h-1zM341 160h1v4h-1zM342 161h1v5h-1zM343 161h1v5h-1zM344 163h1v7h-1zM345 164h1v5h-1zM346 165h1v5h-1zM347 166h1v5h-1zM348 167h1v6h-1zM349 168h1v5h-1zM350 169h1v5h-1zM351 170h1v7h-1zM352 172h1v7h-1zM353 173h1v4h-1zM354 174h1v4h-1zM355 175h1v4h-1zM356 176h1v4h-1zM357 177h1v4h-1zM358 175h1v7h-1zM359 179h1v4h-1zM360 180h1v4h-1zM361 181h1v5h-1zM362 182h1v4h-1zM363 183h1v4h-1zM364 184h1v4h-1zM365 185h1v4h-1zM366 185h1v7h-1zM367 186h1v6h-1zM368 186h1v7h-1zM369 186h1v8h-1zM370 189h1v6h-1zM371 189h1v6h-1zM372 190h1v5h-1zM373 192h1v4h-1zM374 193h1v4h-1zM375 193h1v5h-1zM376 194h1v5h-1zM377 192h1v7h-1zM378 196h1v4h-1zM379 197h1v7h-1zM380 198h1v7h-1zM381 197h1v5h-1zM382 199h1v4h-1zM383 199h1v7h-1zM384 200h1v5h-1zM385 199h1v6h-1zM386 202h1v5h-1zM387 203h1v5h-1zM388 203h1v5h-1zM389 202h1v6h-1zM390 204h1v5h-1zM391 205h1v5h-1zM392 206h1v7h-1zM393 206h1v4h-1zM394 207h1v4h-1zM395 207h1v4h-1zM396 208h1v4h-1zM397 208h1v4h-1zM398 209h1v4h-1zM399 209h1v4h-1zM400 210h1v4h-1zM401 209h1v7h-1zM402 210h1v7h-1zM403 210h1v6h-1zM404 212h1v4h-1zM405 211h1v5h-1zM406 212h1v5h-1zM407 213h1v6h-1zM408 213h1v4h-1zM409 213h1v4h-1zM410 213h1v6h-1zM411 211h1v7h-1zM412 213h1v5h-1zM413 214h1v4h-1zM414 214h1v5h-1zM415 215h1v4h-1zM416 216h1v3h-1zM417 214h1v5h-1zM418 216h1v4h-1zM419 216h1v5h-1zM420 216h1v6h-1zM421 216h1v4h-1zM422 217h1v4h-1zM423 217h1v3h-1zM424 217h1v3h-1zM425 214h1v6h-1zM426 217h1v3h-1zM427 216h1v5h-1zM428 217h1v3h-1zM429 217h1v3h-1zM430 217h1v3h-1zM431 217h1v3h-1zM432 217h1v3h-1zM433 217h1v3h-1zM434 217h1v3h-1zM435 216h1v4h-1zM436 216h1v4h-1zM437 214h1v6h-1zM438 216h1v4h-1zM439 215h1v4h-1zM440 216h1v4h-1zM441 215h1v4h-1zM442 214h1v6h-1zM443 215h1v4h-1zM444 215h1v4h-1zM445 214h1v4h-1zM446 214h1v5h-1zM447 214h1v4h-1zM448 211h1v7h-1zM449 211h1v6h-1zM450 213h1v4h-1zM451 212h1v4h-1zM452 212h1v4h-1zM453 212h1v5h-1zM454 211h1v6h-1zM455 211h1v4h-1zM456 208h1v7h-1zM457 210h1v4h-1zM458 209h1v4h-1zM459 209h1v4h-1zM460 208h1v4h-1zM461 208h1v5h-1zM462 207h1v4h-1zM463 207h1v4h-1zM464 206h1v4h-1zM465 204h1v6h-1zM466 205h1v4h-1zM467 203h1v6h-1zM468 202h1v7h-1zM469 201h1v8h-1zM470 200h1v6h-1zM471 202h1v5h-1zM472 200h1v5h-1zM473 199h1v8h-1zM474 200h1v7h-1zM475 199h1v7h-1zM476 198h1v4h-1zM477 197h1v5h-1zM478 197h1v4h-1zM479 195h1v5h-1zM480 194h1v5h-1zM481 194h1v4h-1zM482 192h1v6h-1zM483 193h1v4h-1zM484 192h1v5h-1zM485 191h1v5h-1zM486 190h1v5h-1zM487 189h1v4h-1zM488 187h1v5h-1zM489 187h1v5h-1zM490 184h1v7h-1zM491 185h1v5h-1zM492 182h1v9h-1zM493 182h1v6h-1zM494 181h1v6h-1zM495 182h1v6h-1zM496 180h1v6h-1zM497 180h1v5h-1zM498 178h1v5h-1zM499 177h1v5h-1zM500 176h1v8h-1zM501 175h1v8h-1zM502 174h1v5h-1zM503 173h1v6h-1zM504 172h1v5h-1zM505 171h1v5h-1zM506 169h1v6h-1zM507 168h1v5h-1zM508 167h1v5h-1zM509 166h1v5h-1zM510 166h1v7h-1zM511 165h1v4h-1zM512 162h1v6h-1zM513 161h1v7h-1zM514 159h1v7h-1zM515 160h1v4h-1zM516 159h1v4h-1zM517 158h1v4h-1zM518 156h1v6h-1zM519 155h1v6h-1zM520 154h1v5h-1zM521 153h1v4h-1zM522 149h1v8h-1zM523 150h1v6h-1zM524 149h1v5h-1zM525 148h1v5h-1zM526 146h1v5h-1zM527 146h1v4h-1zM528 144h1v5h-1zM529 143h1v5h-1zM530 140h1v7h-1zM531 141h1v4h-1zM532 138h1v6h-1zM533 138h1v5h-1zM534 136h1v6h-1zM535 136h1v5h-1zM536 134h1v5h-1zM537 133h1v5h-1zM538 132h1v5h-1zM539 131h1v4h-1zM540 129h1v5h-1zM541 127h1v6h-1zM542 126h1v5h-1zM543 125h1v5h-1zM544 123h1v7h-1zM545 122h1v7h-1zM546 122h1v4h-1zM547 119h1v7h-1zM548 118h1v7h-1zM549 117h1v6h-1zM550 116h1v5h-1zM551 115h1v6h-1zM552 114h1v6h-1zM553 113h1v6h-1zM554 111h1v6h-1zM555 110h1v6h-1zM556 109h1v6h-1zM557 105h1v7h-1zM558 104h1v7h-1zM559 105h1v8h-1zM560 104h1v5h-1zM561 103h1v5h-1zM562 101h1v5h-1zM563 99h1v6h-1zM564 97h1v8h-1zM565 97h1v6h-1zM566 97h1v4h-1zM567 95h1v5h-1zM568 94h1v5h-1zM569 93h1v6h-1zM570 92h1v6h-1zM571 89h1v9h-1zM572 89h1v5h-1zM573 88h1v6h-1zM574 87h1v7h-1zM575 86h1v5h-1zM576 84h1v5h-1zM577 82h1v6h-1zM578 82h1v6h-1zM579 81h1v4h-1zM580 79h1v5h-1zM581 78h1v5h-1zM582 76h1v6h-1zM583 76h1v5h-1zM584 75h1v5h-1zM585 74h1v5h-1zM586 73h1v4h-1zM587 72h1v4h-1zM588 71h1v4h-1zM589 69h1v6h-1zM590 67h1v6h-1zM591 67h1v5h-1zM592 66h1v5h-1zM593 65h1v7h-1zM594 64h1v5h-1zM595 62h1v6h-1zM596 61h1v8h-1zM597 60h1v5h-1zM598 60h1v4h-1zM599 59h1v4h-1zM600 58h1v5h-1zM601 57h1v5h-1zM602 56h1v4h-1zM603 54h1v5h-1zM604 53h1v5h-1zM605 53h1v6h-1zM606 52h1v6h-1zM607 51h1v5h-1zM608 49h1v6h-1zM609 49h1v6h-1zM610 47h1v8h-1zM611 48h1v4h-1zM612 47h1v6h-1zM613 44h1v6h-1zM614 43h1v6h-1zM615 43h1v5h-1zM616 41h1v7h-1zM617 40h1v7h-1zM618 41h1v5h-1zM619 40h1v5h-1zM620 40h1v4h-1zM621 37h1v6h-1zM622 36h1v7h-1zM623 38h1v4h-1zM624 37h1v5h-1zM625 36h1v5h-1zM626 33h1v8h-1zM627 35h1v5h-1zM628 34h1v4h-1zM629 32h1v6h-1zM630 33h1v4h-1zM631 32h1v7h-1zM632 31h1v6h-1zM633 31h1v6h-1zM634 30h1v4h-1zM635 30h1v4h-1zM636 29h1v4h-1zM637 29h1v3h-1zM638 29h1v3h-1zM639 29h1v2h-1zM640 29h1v2h-1zM641 29h1v1h-1zM642 29h1v2h-1zM643 29h1v3h-1z" fill="#ffff00"/>
  <path d="M24 131h1v6h-1zM25 131h1v6h-1zM26 131h1v6h-1zM27 131h1v6h-1zM28 131h1v6h-1zM29 131h1v8h-1zM30 131h1v8h-1zM31 133h1v6h-1zM524 133h1v4h-1zM525 133h1v4h-1zM526 133h1v4h-1zM527 133h1v6h-1zM528 131h1v8h-1zM529 131h1v8h-1zM530 131h1v6h-1zM531 133h1v6h-1zM32 135h1v2h-1zM33 133h1v4h-1zM34 133h1v6h-1zM35 133h1v6h-1zM36 133h1v6h-1zM37 133h1v6h-1zM38 133h1v6h-1zM39 135h1v2h-1zM40 135h1v2h-1zM41 135h1v2h-1zM42 135h1v4h-1zM43 135h1v2h-1zM44 133h1v4h-1zM45 135h1v2h-1zM46 135h1v2h-1zM47 135h1v2h-1zM48 135h1v2h-1zM49 131h1v8h-1zM50 135h1v4h-1zM51 133h1v6h-1zM52 133h1v8h-1zM53 133h1v6h-1zM54 135h1v4h-1zM55 135h1v2h-1zM56 135h1v4h-1zM57 135h1v4h-1zM58 135h1v4h-1zM59 133h1v4h-1zM60 135h1v2h-1zM61 135h1v2h-1zM62 135h1v4h-1zM63 135h1v4h-1zM64 133h1v6h-1zM65 133h1v6h-1zM66 133h1v6h-1zM67 135h1v4h-1zM68 135h1v2h-1zM69 133h1v6h-1zM70 133h1v4h-1zM71 133h1v4h-1zM72 133h1v6h-1zM73 133h1v4h-1zM74 131h1v8h-1zM75 133h1v4h-1zM76 135h1v2h-1zM77 133h1v4h-1zM78 133h1v8h-1zM79 133h1v8h-1zM80 133h1v4h-1zM81 133h1v6h-1zM82 133h1v6h-1zM83 135h1v4h-1zM84 133h1v6h-1zM85 133h1v6h-1zM86 133h1v6h-1zM87 135h1v4h-1zM88 135h1v4h-1zM89 133h1v4h-1zM90 131h1v6h-1zM91 131h1v6h-1zM92 133h1v4h-1zM93 135h1v2h-1zM94 135h1v2h-1zM95 135h1v2h-1zM96 135h1v4h-1zM97 131h1v6h-1zM98 135h1v2h-1zM99 133h1v4h-1zM100 133h1v4h-1zM101 133h1v6h-1zM102 133h1v4h-1zM103 133h1v4h-1zM104 133h1v4h-1zM105 133h1v8h-1zM106 133h1v8h-1zM107 133h1v6h-1zM108 133h1v8h-1zM109 133h1v4h-1zM110 133h1v4h-1zM111 133h1v6h-1zM112 133h1v6h-1zM113 135h1v2h-1zM114 135h1v2h-1zM115 135h1v4h-1zM116 133h1v6h-1zM117 135h1v4h-1zM118 135h1v4h-1zM119 133h1v4h-1zM120 133h1v4h-1zM121 131h1v8h-1zM122 131h1v8h-1zM123 135h1v4h-1zM124 133h1v6h-1zM125 135h1v2h-1zM126 133h1v4h-1zM127 135h1v4h-1zM128 133h1v6h-1zM129 133h1v8h-1zM130 133h1v4h-1zM131 133h1v4h-1zM132 135h1v4h-1zM133 135h1v2h-1zM134 135h1v2h-1zM135 135h1v2h-1zM136 135h1v2h-1zM137 133h1v6h-1zM138 133h1v6h-1zM139 133h1v4h-1zM140 133h1v4h-1zM141 133h1v4h-1zM142 133h1v4h-1zM143 133h1v4h-1zM144 135h1v4h-1zM145 135h1v4h-1zM146 133h1v4h-1zM147 133h1v6h-1zM148 133h1v6h-1zM149 133h1v6h-1zM150 133h1v4h-1zM151 133h1v4h-1zM152 131h1v6h-1zM153 131h1v8h-1zM154 135h1v4h-1zM155 133h1v6h-1zM156 133h1v6h-1zM157 133h1v4h-1zM158 133h1v4h-1zM159 133h1v6h-1zM160 135h1v4h-1zM161 133h1v6h-1zM162 133h1v6h-1zM163 133h1v6h-1zM164 133h1v6h-1zM165 133h1v6h-1zM166 135h1v4h-1zM167 135h1v4h-1zM168 135h1v4h-1zM169 135h1v4h-1zM170 133h1v4h-1zM171 133h1v4h-1zM172 135h1v2h-1zM173 135h1v2h-1zM174 133h1v8h-1zM175 131h1v8h-1zM176 131h1v8h-1zM177 131h1v6h-1zM178 135h1v4h-1zM179 135h1v2h-1zM180 133h1v4h-1zM181 133h1v4h-1zM182 135h1v2h-1zM183 135h1v2h-1zM184 135h1v2h-1zM185 133h1v4h-1zM186 133h1v4h-1zM187 135h1v6h-1zM188 135h1v6h-1zM189 133h1v6h-1zM190 135h1v4h-1zM191 135h1v4h-1zM192 135h1v4h-1zM193 135h1v2h-1zM194 133h1v8h-1zM195 135h1v6h-1zM196 133h1v4h-1zM197 133h1v6h-1zM198 133h1v4h-1zM199 133h1v8h-1zM200 135h1v6h-1zM201 135h1v4h-1zM202 135h1v2h-1zM203 135h1v4h-1zM204 135h1v2h-1zM205 135h1v4h-1zM206 135h1v4h-1zM207 133h1v4h-1zM208 135h1v2h-1zM209 131h1v6h-1zM210 133h1v4h-1zM211 135h1v2h-1zM212 135h1v4h-1zM213 135h1v2h-1zM214 135h1v2h-1zM215 135h1v4h-1zM216 135h1v4h-1zM217 133h1v4h-1zM218 133h1v8h-1zM219 135h1v2h-1zM220 135h1v6h-1zM221 135h1v2h-1zM222 135h1v2h-1zM223 133h1v6h-1zM224 135h1v4h-1zM225 135h1v4h-1zM226 133h1v8h-1zM227 133h1v8h-1zM228 133h1v8h-1zM229 133h1v6h-1zM230 133h1v4h-1zM231 133h1v4h-1zM232 133h1v6h-1zM233 135h1v4h-1zM234 133h1v6h-1zM235 133h1v4h-1zM236 133h1v6h-1zM237 133h1v6h-1zM238 133h1v4h-1zM239 135h1v6h-1zM240 135h1v6h-1zM241 135h1v2h-1zM242 135h1v2h-1zM243 133h1v4h-1zM244 133h1v6h-1zM245 135h1v4h-1zM246 135h1v4h-1zM247 135h1v4h-1zM248 135h1v4h-1zM249 135h1v4h-1zM250 135h1v4h-1zM251 135h1v6h-1zM252 135h1v6h-1zM253 135h1v6h-1zM254 133h1v6h-1zM255 135h1v4h-1zM256 135h1v4h-1zM257 135h1v4h-1zM258 135h1v4h-1zM259 135h1v4h-1zM260 133h1v8h-1zM261 133h1v4h-1zM262 135h1v4h-1zM263 135h1v4h-1zM264 135h1v4h-1zM265 133h1v4h-1zM266 135h1v2h-1zM267 135h1v4h-1zM268 135h1v2h-1zM269 135h1v2h-1zM270 135h1v4h-1zM271 133h1v6h-1zM272 133h1v6h-1zM273 135h1v4h-1zM274 135h1v4h-1zM275 135h1v4h-1zM276 135h1v2h-1zM277 133h1v4h-1zM278 133h1v6h-1zM279 133h1v6h-1zM280 135h1v4h-1zM281 135h1v2h-1zM282 135h1v2h-1zM283 133h1v4h-1zM284 133h1v4h-1zM285 133h1v4h-1zM286 133h1v4h-1zM287 135h1v4h-1zM288 133h1v4h-1zM289 135h1v4h-1zM290 133h1v6h-1zM291 133h1v6h-1zM292 133h1v4h-1zM293 133h1v6h-1zM294 135h1v6h-1zM295 135h1v2h-1zM296 131h1v8h-1zM297 135h1v4h-1zM298 135h1v4h-1zM299 135h1v4h-1zM300 135h1v2h-1zM301 135h1v2h-1zM302 133h1v6h-1zM303 133h1v8h-1zM304 133h1v8h-1zM305 135h1v2h-1zM306 133h1v4h-1zM307 135h1v2h-1zM308 135h1v6h-1zM309 135h1v4h-1zM310 133h1v4h-1zM311 133h1v4h-1zM312 133h1v4h-1zM313 135h1v2h-1zM314 135h1v2h-1zM315 133h1v4h-1zM316 133h1v6h-1zM317 131h1v8h-1zM318 135h1v6h-1zM319 133h1v8h-1zM320 133h1v8h-1zM321 133h1v6h-1zM322 135h1v2h-1zM323 135h1v4h-1zM324 135h1v4h-1zM325 135h1v4h-1zM326 135h1v4h-1zM327 131h1v8h-1zM328 133h1v6h-1zM329 133h1v4h-1zM330 135h1v6h-1zM331 135h1v6h-1zM332 135h1v6h-1zM333 135h1v4h-1zM532 135h1v2h-1zM533 135h1v2h-1zM534 133h1v6h-1zM535 133h1v6h-1zM536 133h1v6h-1zM537 135h1v2h-1zM538 131h1v6h-1zM539 135h1v2h-1zM540 135h1v2h-1zM541 133h1v4h-1zM542 133h1v4h-1zM543 133h1v4h-1zM544 135h1v2h-1zM545 135h1v4h-1zM546 133h1v6h-1zM547 133h1v6h-1zM548 133h1v6h-1zM549 135h1v2h-1zM550 133h1v4h-1zM551 135h1v2h-1zM552 135h1v2h-1zM553 135h1v2h-1zM554 135h1v6h-1zM555 135h1v4h-1zM556 133h1v4h-1zM557 133h1v6h-1zM558 133h1v6h-1zM559 133h1v4h-1zM560 135h1v2h-1zM561 133h1v6h-1zM562 133h1v4h-1zM563 133h1v4h-1zM564 133h1v6h-1zM565 133h1v6h-1zM566 133h1v4h-1zM567 135h1v2h-1zM568 133h1v6h-1zM569 133h1v6h-1zM570 133h1v6h-1zM571 133h1v6h-1zM572 133h1v4h-1zM573 135h1v2h-1zM574 135h1v4h-1zM575 135h1v2h-1zM576 135h1v2h-1zM577 133h1v4h-1zM578 133h1v4h-1zM579 133h1v4h-1zM580 135h1v2h-1zM581 135h1v4h-1zM582 135h1v4h-1zM583 135h1v6h-1zM584 135h1v4h-1zM585 135h1v4h-1zM586 135h1v4h-1zM587 133h1v6h-1zM588 135h1v2h-1zM589 135h1v2h-1zM590 135h1v2h-1zM591 135h1v2h-1zM592 135h1v6h-1zM593 133h1v8h-1zM594 135h1v2h-1zM595 135h1v2h-1zM596 135h1v2h-1zM597 133h1v4h-1zM598 135h1v2h-1zM599 133h1v4h-1zM600 133h1v4h-1zM601 135h1v4h-1zM602 135h1v2h-1zM603 135h1v2h-1zM604 135h1v2h-1zM605 133h1v4h-1zM606 135h1v4h-1zM607 135h1v4h-1zM608 135h1v2h-1zM609 133h1v4h-1zM610 133h1v4h-1zM611 133h1v4h-1zM612 133h1v6h-1zM613 131h1v8h-1zM614 133h1v6h-1zM615 133h1v6h-1zM616 133h1v4h-1zM617 135h1v2h-1zM618 135h1v2h-1zM619 135h1v4h-1zM620 135h1v2h-1zM621 135h1v2h-1zM622 135h1v4h-1zM623 133h1v6h-1zM624 135h1v4h-1zM625 135h1v4h-1zM626 135h1v4h-1zM627 135h1v4h-1zM628 133h1v6h-1zM629 135h1v4h-1zM630 135h1v6h-1zM631 133h1v4h-1zM632 135h1v4h-1zM633 133h1v6h-1zM634 133h1v4h-1zM635 131h1v6h-1zM636 131h1v6h-1zM637 135h1v2h-1zM638 135h1v2h-1zM639 133h1v6h-1zM640 133h1v4h-1zM641 133h1v4h-1zM642 133h1v8h-1zM643 135h1v4h-1zM644 135h1v4h-1zM645 133h1v6h-1zM646 133h1v6h-1zM647 133h1v4h-1zM648 133h1v4h-1zM649 133h1v4h-1zM650 133h1v4h-1zM651 133h1v4h-1zM652 133h1v6h-1zM653 133h1v6h-1zM654 135h1v4h-1zM655 133h1v6h-1zM16 221h1v8h-1zM17 223h1v6h-1zM18 223h1v6h-1zM19 223h1v6h-1zM20 223h1v4h-1zM21 223h1v8h-1zM22 223h1v4h-1zM335 223h1v4h-1zM336 219h1v8h-1zM337 219h1v8h-1zM338 223h1v4h-1zM339 221h1v6h-1zM340 221h1v10h-1zM341 221h1v8h-1zM342 221h1v8h-1zM343 221h1v6h-1zM344 223h1v4h-1zM345 223h1v4h-1zM346 223h1v4h-1zM347 223h1v4h-1zM348 223h1v4h-1zM349 223h1v4h-1zM350 223h1v8h-1zM351 223h1v4h-1zM352 221h1v6h-1zM353 221h1v6h-1zM354 221h1v6h-1zM355 221h1v6h-1zM356 221h1v6h-1zM357 221h1v6h-1zM358 221h1v6h-1zM359 223h1v4h-1zM360 223h1v6h-1zM361 221h1v8h-1zM362 221h1v6h-1zM363 223h1v4h-1zM364 223h1v4h-1zM365 223h1v6h-1zM366 221h1v6h-1zM367 223h1v4h-1zM368 223h1v4h-1zM369 221h1v6h-1zM370 221h1v6h-1zM371 223h1v4h-1zM372 223h1v4h-1zM373 221h1v6h-1zM374 223h1v4h-1zM375 223h1v4h-1zM376 221h1v6h-1zM377 221h1v8h-1zM378 221h1v8h-1zM379 219h1v10h-1zM380 223h1v4h-1zM381 221h1v8h-1zM382 221h1v8h-1zM383 221h1v8h-1zM384 223h1v6h-1zM385 221h1v6h-1zM386 223h1v6h-1zM387 223h1v8h-1zM388 223h1v8h-1zM389 221h1v10h-1zM390 223h1v8h-1zM391 221h1v8h-1zM392 221h1v6h-1zM393 221h1v6h-1zM394 223h1v6h-1zM395 223h1v6h-1zM396 223h1v6h-1zM397 223h1v6h-1zM398 221h1v8h-1zM399 221h1v6h-1zM400 221h1v6h-1zM401 221h1v6h-1zM402 221h1v8h-1zM403 221h1v8h-1zM404 223h1v6h-1zM405 223h1v4h-1zM406 223h1v4h-1zM407 223h1v4h-1zM408 221h1v6h-1zM409 221h1v6h-1zM410 221h1v6h-1zM411 221h1v6h-1zM412 221h1v6h-1zM413 221h1v6h-1zM414 223h1v4h-1zM415 221h1v6h-1zM416 223h1v4h-1zM417 223h1v6h-1zM418 221h1v8h-1zM419 223h1v6h-1zM420 223h1v6h-1zM421 223h1v6h-1zM422 223h1v4h-1zM423 223h1v4h-1zM424 221h1v6h-1zM425 221h1v6h-1zM426 223h1v6h-1zM427 223h1v6h-1zM428 223h1v4h-1zM429 223h1v4h-1zM430 221h1v10h-1zM431 223h1v6h-1zM432 219h1v10h-1zM433 223h1v4h-1zM434 223h1v4h-1zM435 221h1v6h-1zM436 221h1v8h-1zM437 223h1v6h-1zM438 223h1v4h-1zM439 221h1v6h-1zM440 221h1v6h-1zM441 223h1v4h-1zM442 223h1v4h-1zM443 223h1v4h-1zM444 223h1v4h-1zM445 221h1v8h-1zM446 221h1v6h-1zM447 221h1v8h-1zM448 221h1v6h-1zM449 221h1v8h-1zM450 223h1v4h-1zM451 223h1v4h-1zM452 221h1v6h-1zM453 223h1v4h-1zM454 223h1v4h-1zM455 221h1v8h-1zM456 221h1v6h-1zM457 221h1v6h-1zM458 223h1v4h-1zM459 223h1v4h-1zM460 223h1v4h-1zM461 223h1v4h-1zM462 223h1v4h-1zM463 223h1v4h-1zM464 221h1v6h-1zM465 221h1v8h-1zM466 223h1v6h-1zM467 223h1v4h-1zM468 223h1v4h-1zM469 223h1v4h-1zM470 223h1v4h-1zM471 223h1v4h-1zM472 221h1v6h-1zM473 221h1v8h-1zM474 223h1v4h-1zM475 221h1v8h-1zM476 221h1v8h-1zM477 223h1v4h-1zM478 219h1v8h-1zM479 223h1v4h-1zM480 223h1v4h-1zM481 223h1v4h-1zM482 223h1v6h-1zM483 223h1v6h-1zM484 223h1v6h-1zM485 223h1v4h-1zM486 223h1v4h-1zM487 223h1v4h-1zM488 221h1v8h-1zM489 221h1v8h-1zM490 223h1v4h-1zM491 223h1v4h-1zM492 223h1v4h-1zM493 221h1v6h-1zM494 223h1v4h-1zM495 223h1v4h-1zM496 221h1v6h-1zM497 221h1v6h-1zM498 223h1v6h-1zM499 221h1v6h-1zM500 221h1v6h-1zM501 221h1v6h-1zM502 221h1v6h-1zM503 221h1v8h-1zM504 223h1v4h-1zM505 223h1v6h-1zM506 223h1v6h-1zM507 221h1v6h-1zM508 221h1v6h-1zM509 221h1v6h-1zM510 221h1v6h-1zM511 223h1v4h-1zM512 223h1v4h-1zM513 223h1v4h-1zM514 223h1v6h-1zM515 223h1v6h-1zM516 221h1v6h-1zM517 221h1v6h-1zM518 221h1v6h-1zM519 223h1v4h-1zM520 221h1v8h-1zM521 221h1v8h-1zM522 223h1v6h-1zM23 131h1v96h-1zM334 133h1v96h-1zM523 131h1v96h-1z" fill="#00ffff"/>
  <path d="M16 153h1v6h-1zM17 153h1v5h-1zM18 152h1v6h-1zM19 151h1v6h-1zM20 149h1v6h-1zM21 145h1v8h-1zM22 146h1v6h-1zM23 145h1v5h-1zM24 145h1v5h-1zM25 143h1v5h-1zM26 142h1v6h-1zM27 141h1v6h-1zM28 139h1v5h-1zM29 137h1v6h-1zM30 134h1v8h-1zM31 133h1v7h-1zM32 134h1v5h-1zM33 133h1v5h-1zM34 132h1v5h-1zM35 131h1v4h-1zM36 129h1v5h-1zM37 128h1v6h-1zM38 127h1v4h-1zM39 125h1v5h-1zM40 124h1v5h-1zM41 122h1v6h-1zM42 121h1v5h-1zM43 120h1v5h-1zM44 119h1v5h-1zM45 118h1v4h-1zM46 114h1v8h-1zM47 115h1v7h-1zM48 113h1v5h-1zM49 112h1v8h-1zM50 111h1v5h-1zM51 109h1v5h-1zM52 107h1v7h-1zM53 107h1v6h-1zM54 106h1v8h-1zM55 104h1v6h-1zM56 103h1v6h-1zM57 100h1v8h-1zM58 100h1v5h-1zM59 98h1v6h-1zM60 95h1v8h-1zM61 97h1v5h-1zM62 94h1v6h-1zM63 94h1v5h-1zM64 92h1v9h-1zM65 92h1v4h-1zM66 88h1v7h-1zM67 87h1v7h-1zM68 88h1v4h-1zM69 86h1v6h-1zM70 85h1v8h-1zM71 82h1v7h-1zM72 83h1v5h-1zM73 81h1v5h-1zM74 80h1v6h-1zM75 78h1v6h-1zM76 78h1v4h-1zM77 76h1v6h-1zM78 73h1v7h-1zM79 74h1v7h-1zM80 73h1v7h-1zM81 72h1v4h-1zM82 69h1v6h-1zM83 69h1v5h-1zM84 66h1v7h-1zM85 67h1v4h-1zM86 66h1v5h-1zM87 64h1v5h-1zM88 61h1v7h-1zM89 61h1v6h-1zM90 61h1v4h-1zM91 60h1v5h-1zM92 57h1v7h-1zM93 56h1v6h-1zM94 54h1v7h-1zM95 55h1v5h-1zM96 54h1v8h-1zM97 53h1v6h-1zM98 52h1v5h-1zM99 50h1v5h-1zM100 49h1v5h-1zM101 48h1v5h-1zM102 48h1v4h-1zM103 47h1v4h-1zM104 46h1v6h-1zM105 45h1v4h-1zM106 43h1v6h-1zM107 43h1v4h-1zM108 42h1v4h-1zM109 41h1v4h-1zM110 39h1v5h-1zM111 38h1v5h-1zM112 38h1v5h-1zM113 37h1v5h-1zM114 35h1v6h-1zM115 35h1v6h-1zM116 32h1v8h-1zM117 34h1v5h-1zM118 32h1v5h-1zM119 32h1v4h-1zM120 29h1v7h-1zM121 30h1v7h-1zM122 29h1v6h-1zM123 29h1v4h-1zM124 29h1v3h-1zM125 29h1v2h-1zM126 29h1v1h-1zM127 29h1v2h-1zM227 29h1v1h-1zM229 29h1v1h-1zM230 29h1v2h-1zM231 29h1v3h-1zM232 29h1v3h-1zM233 29h1v4h-1zM234 30h1v4h-1zM235 29h1v6h-1zM236 31h1v7h-1zM237 32h1v4h-1zM238 33h1v4h-1zM239 32h1v7h-1zM240 35h1v5h-1zM241 34h1v7h-1zM242 34h1v8h-1zM243 37h1v6h-1zM244 37h1v6h-1zM245 38h1v6h-1zM246 40h1v6h-1zM247 41h1v5h-1zM248 41h1v7h-1zM249 43h1v5h-1zM250 41h1v8h-1zM251 45h1v6h-1zM252 46h1v6h-1zM253 47h1v6h-1zM254 48h1v5h-1zM255 49h1v5h-1zM256 50h1v5h-1zM257 51h1v5h-1zM258 52h1v5h-1zM259 53h1v8h-1zM260 55h1v4h-1zM261 56h1v5h-1zM262 57h1v4h-1zM263 58h1v4h-1zM264 59h1v4h-1zM265 58h1v7h-1zM266 61h1v5h-1zM267 62h1v5h-1zM268 63h1v5h-1zM269 64h1v5h-1zM270 66h1v4h-1zM271 67h1v7h-1zM272 68h1v5h-1zM273 68h1v6h-1zM274 68h1v7h-1zM275 72h1v4h-1zM276 73h1v4h-1zM277 74h1v7h-1zM278 75h1v7h-1zM279 76h1v6h-1zM280 77h1v5h-1zM281 78h1v6h-1zM282 80h1v5h-1zM283 81h1v5h-1zM284 83h1v4h-1zM285 83h1v5h-1zM286 85h1v5h-1zM287 86h1v5h-1zM288 88h1v4h-1zM289 89h1v6h-1zM290 90h1v6h-1zM291 90h1v6h-1zM292 93h1v4h-1zM293 94h1v6h-1zM294 95h1v5h-1zM295 95h1v7h-1zM296 96h1v6h-1zM297 99h1v5h-1zM298 100h1v5h-1zM299 102h1v5h-1zM300 101h1v8h-1zM301 102h1v8h-1zM302 103h1v8h-1zM303 105h1v6h-1zM304 106h1v7h-1zM305 109h1v5h-1zM306 111h1v4h-1zM307 111h1v6h-1zM308 113h1v5h-1zM309 115h1v4h-1zM310 113h1v9h-1zM311 117h1v5h-1zM312 116h1v7h-1zM313 120h1v5h-1zM314 119h1v7h-1zM315 120h1v8h-1zM316 124h1v4h-1zM317 124h1v6h-1zM318 126h1v6h-1zM319 127h1v5h-1zM320 127h1v6h-1zM321 130h1v5h-1zM322 130h1v6h-1zM323 133h1v4h-1zM324 134h1v5h-1zM325 135h1v6h-1zM326 136h1v6h-1zM327 138h1v4h-1zM328 138h1v5h-1zM329 138h1v7h-1zM330 139h1v8h-1zM331 143h1v4h-1zM332 144h1v4h-1zM333 145h1v5h-1zM334 146h1v5h-1zM335 145h1v7h-1zM336 149h1v4h-1zM337 150h1v4h-1zM338 151h1v5h-1zM339 151h1v6h-1zM340 152h1v8h-1zM341 155h1v6h-1zM342 156h1v5h-1zM343 156h1v6h-1zM344 158h1v6h-1zM345 159h1v5h-1zM346 160h1v5h-1zM347 159h1v7h-1zM348 163h1v4h-1zM349 164h1v5h-1zM350 165h1v5h-1zM351 165h1v6h-1zM352 167h1v6h-1zM353 168h1v6h-1zM354 169h1v6h-1zM355 170h1v6h-1zM356 171h1v5h-1zM357 172h1v5h-1zM358 173h1v5h-1zM359 173h1v6h-1zM360 176h1v5h-1zM361 175h1v8h-1zM362 178h1v4h-1zM363 178h1v5h-1zM364 179h1v5h-1zM365 181h1v4h-1zM366 181h1v5h-1zM367 182h1v5h-1zM368 183h1v7h-1zM369 184h1v6h-1zM370 185h1v4h-1zM371 186h1v4h-1zM372 187h1v4h-1zM373 188h1v4h-1zM374 189h1v4h-1zM375 189h1v6h-1zM376 188h1v7h-1zM377 191h1v4h-1zM378 191h1v6h-1zM379 193h1v4h-1zM380 193h1v7h-1zM381 194h1v5h-1zM382 195h1v6h-1zM383 196h1v4h-1zM384 197h1v4h-1zM385 197h1v4h-1zM386 196h1v6h-1zM387 198h1v5h-1zM388 199h1v5h-1zM389 200h1v4h-1zM390 200h1v6h-1zM391 200h1v6h-1zM392 202h1v6h-1zM393 203h1v4h-1zM394 202h1v6h-1zM395 204h1v4h-1zM396 204h1v7h-1zM397 205h1v4h-1zM398 205h1v4h-1zM399 206h1v4h-1zM400 206h1v4h-1zM401 207h1v4h-1zM402 206h1v5h-1zM403 208h1v6h-1zM404 208h1v6h-1zM405 209h1v3h-1zM406 209h1v4h-1zM407 209h1v4h-1zM408 208h1v5h-1zM409 210h1v4h-1zM410 210h1v4h-1zM411 209h1v5h-1zM412 211h1v4h-1zM413 211h1v4h-1zM414 212h1v3h-1zM415 212h1v3h-1zM416 210h1v6h-1zM417 211h1v5h-1zM418 212h1v4h-1zM419 213h1v3h-1zM420 212h1v5h-1zM421 212h1v4h-1zM422 211h1v6h-1zM423 213h1v4h-1zM424 213h1v5h-1zM425 213h1v4h-1zM426 211h1v6h-1zM427 212h1v5h-1zM428 213h1v4h-1zM429 213h1v4h-1zM430 212h1v5h-1zM431 212h1v5h-1zM432 213h1v4h-1zM433 213h1v4h-1zM434 212h1v5h-1zM435 212h1v5h-1zM436 212h1v4h-1zM437 212h1v4h-1zM438 213h1v3h-1zM439 212h1v4h-1zM440 212h1v4h-1zM441 210h1v8h-1zM442 210h1v5h-1zM443 212h1v3h-1zM444 210h1v6h-1zM445 210h1v5h-1zM446 210h1v5h-1zM447 210h1v5h-1zM448 210h1v4h-1zM449 210h1v4h-1zM450 208h1v5h-1zM451 209h1v4h-1zM452 209h1v3h-1zM453 208h1v5h-1zM454 208h1v4h-1zM455 207h1v4h-1zM456 207h1v5h-1zM457 206h1v4h-1zM458 206h1v4h-1zM459 205h1v5h-1zM460 205h1v5h-1zM461 202h1v7h-1zM462 204h1v4h-1zM463 203h1v7h-1zM464 203h1v4h-1zM465 202h1v4h-1zM466 201h1v4h-1zM467 200h1v5h-1zM468 199h1v5h-1zM469 199h1v5h-1zM470 199h1v4h-1zM471 198h1v6h-1zM472 196h1v6h-1zM473 197h1v5h-1zM474 196h1v4h-1zM475 195h1v4h-1zM476 195h1v4h-1zM477 193h1v5h-1zM478 193h1v6h-1zM479 192h1v4h-1zM480 191h1v5h-1zM481 191h1v4h-1zM482 190h1v4h-1zM483 189h1v4h-1zM484 188h1v4h-1zM485 187h1v4h-1zM486 185h1v5h-1zM487 184h1v6h-1zM488 184h1v5h-1zM489 183h1v5h-1zM490 181h1v6h-1zM491 182h1v5h-1zM492 181h1v4h-1zM493 178h1v6h-1zM494 179h1v4h-1zM495 178h1v4h-1zM496 177h1v4h-1zM497 176h1v5h-1zM498 173h1v6h-1zM499 172h1v7h-1zM500 171h1v7h-1zM501 170h1v7h-1zM502 169h1v7h-1zM503 168h1v6h-1zM504 168h1v7h-1zM505 167h1v5h-1zM506 166h1v4h-1zM507 165h1v5h-1zM508 164h1v6h-1zM509 161h1v8h-1zM510 160h1v7h-1zM511 159h1v8h-1zM512 158h1v6h-1zM513 158h1v5h-1zM514 157h1v4h-1zM515 154h1v7h-1zM516 154h1v6h-1zM517 153h1v5h-1zM518 151h1v6h-1zM519 150h1v5h-1zM520 149h1v5h-1zM521 147h1v6h-1zM522 147h1v6h-1zM523 146h1v5h-1zM524 145h1v5h-1zM525 141h1v7h-1zM526 140h1v7h-1zM527 139h1v8h-1zM528 140h1v5h-1zM529 138h1v5h-1zM530 137h1v5h-1zM531 136h1v4h-1zM532 135h1v4h-1zM533 133h1v5h-1zM534 132h1v5h-1zM535 131h1v5h-1zM536 129h1v5h-1zM537 126h1v7h-1zM538 127h1v4h-1zM539 124h1v6h-1zM540 124h1v5h-1zM541 122h1v7h-1zM542 121h1v5h-1zM543 119h1v6h-1zM544 117h1v8h-1zM545 116h1v7h-1zM546 116h1v6h-1zM547 115h1v5h-1zM548 114h1v5h-1zM549 112h1v5h-1zM550 111h1v6h-1zM551 109h1v6h-1zM552 108h1v5h-1zM553 106h1v7h-1zM554 105h1v6h-1zM555 103h1v6h-1zM556 103h1v5h-1zM557 102h1v6h-1zM558 100h1v5h-1zM559 98h1v7h-1zM560 98h1v5h-1zM561 97h1v4h-1zM562 95h1v5h-1zM563 94h1v5h-1zM564 92h1v6h-1zM565 91h1v5h-1zM566 89h1v6h-1zM567 89h1v5h-1zM568 87h1v5h-1zM569 86h1v5h-1zM570 84h1v6h-1zM571 83h1v6h-1zM572 83h1v6h-1zM573 81h1v5h-1zM574 80h1v5h-1zM575 77h1v7h-1zM576 78h1v4h-1zM577 76h1v5h-1zM578 75h1v5h-1zM579 73h1v6h-1zM580 73h1v4h-1zM581 72h1v4h-1zM582 70h1v5h-1zM583 69h1v5h-1zM584 68h1v5h-1zM585 67h1v4h-1zM586 63h1v8h-1zM587 64h1v6h-1zM588 63h1v6h-1zM589 61h1v6h-1zM590 61h1v5h-1zM591 60h1v5h-1zM592 59h1v4h-1zM593 57h1v5h-1zM594 54h1v7h-1zM595 54h1v6h-1zM596 53h1v6h-1zM597 51h1v7h-1zM598 50h1v7h-1zM599 51h1v4h-1zM600 50h1v4h-1zM601 48h1v6h-1zM602 48h1v4h-1zM603 47h1v4h-1zM604 46h1v4h-1zM605 45h1v4h-1zM606 43h1v5h-1zM607 40h1v7h-1zM608 39h1v9h-1zM609 40h1v5h-1zM610 40h1v4h-1zM611 39h1v5h-1zM612 38h1v4h-1zM613 37h1v4h-1zM614 36h1v4h-1zM615 34h1v6h-1zM616 34h1v5h-1zM617 33h1v5h-1zM618 32h1v5h-1zM619 32h1v4h-1zM620 31h1v5h-1zM621 30h1v5h-1zM622 29h1v6h-1zM623 29h1v6h-1zM624 29h1v5h-1zM625 29h1v2h-1zM626 29h1v1h-1zM627 29h1v1h-1zM628 29h1v1h-1z" fill="#ff1800"/>
  <path d="M16 151h1v4h-1zM17 151h1v4h-1zM18 151h1v2h-1zM19 151h1v8h-1zM20 149h1v6h-1zM21 149h1v6h-1zM22 149h1v6h-1zM23 149h1v4h-1zM24 149h1v6h-1zM25 149h1v6h-1zM26 149h1v8h-1zM27 147h1v10h-1zM28 151h1v4h-1zM29 149h1v8h-1zM30 149h1v8h-1zM31 149h1v8h-1zM32 147h1v10h-1zM33 147h1v8h-1zM34 149h1v8h-1zM35 149h1v8h-1zM36 147h1v8h-1zM37 147h1v8h-1zM38 147h1v8h-1zM39 149h1v6h-1zM40 149h1v6h-1zM41 151h1v4h-1zM42 151h1v6h-1zM43 151h1v6h-1zM44 149h1v6h-1zM45 151h1v4h-1zM46 151h1v4h-1zM47 149h1v6h-1zM48 149h1v6h-1zM49 149h1v10h-1zM50 149h1v10h-1zM51 151h1v6h-1zM52 151h1v4h-1zM53 151h1v6h-1zM54 149h1v8h-1zM55 149h1v8h-1zM56 151h1v6h-1zM57 147h1v8h-1zM58 151h1v6h-1zM59 151h1v6h-1zM60 149h1v8h-1zM61 149h1v8h-1zM62 149h1v4h-1zM63 149h1v4h-1zM64 149h1v4h-1zM65 149h1v4h-1zM66 149h1v8h-1zM67 147h1v10h-1zM68 147h1v10h-1zM69 147h1v10h-1zM70 151h1v6h-1zM71 149h1v10h-1zM72 149h1v6h-1zM73 149h1v10h-1zM74 149h1v6h-1zM75 149h1v6h-1zM76 149h1v6h-1zM77 149h1v6h-1zM78 149h1v6h-1zM79 149h1v6h-1zM80 149h1v6h-1zM81 149h1v6h-1zM82 149h1v6h-1zM83 149h1v6h-1zM84 149h1v6h-1zM85 149h1v8h-1zM86 151h1v8h-1zM87 151h1v8h-1zM88 149h1v6h-1zM89 149h1v6h-1zM90 149h1v6h-1zM91 149h1v4h-1zM92 149h1v6h-1zM93 151h1v4h-1zM94 147h1v8h-1zM95 151h1v4h-1zM96 149h1v6h-1zM97 149h1v6h-1zM98 149h1v6h-1zM99 149h1v6h-1zM100 149h1v6h-1zM101 149h1v8h-1zM102 149h1v8h-1zM103 151h1v4h-1zM104 151h1v2h-1zM105 149h1v6h-1zM106 147h1v6h-1zM107 151h1v6h-1zM108 151h1v6h-1zM109 149h1v6h-1zM110 149h1v4h-1zM111 149h1v8h-1zM112 147h1v8h-1zM113 149h1v6h-1zM114 149h1v6h-1zM115 149h1v6h-1zM116 149h1v6h-1zM117 149h1v6h-1zM118 149h1v8h-1zM119 149h1v6h-1zM120 149h1v6h-1zM121 149h1v6h-1zM122 149h1v6h-1zM123 149h1v6h-1zM124 149h1v6h-1zM125 149h1v6h-1zM126 149h1v6h-1zM127 149h1v6h-1zM128 149h1v8h-1zM129 149h1v6h-1zM130 149h1v8h-1zM131 149h1v10h-1zM132 151h1v2h-1zM133 151h1v4h-1zM134 149h1v6h-1zM135 149h1v6h-1zM136 151h1v6h-1zM137 151h1v6h-1zM138 151h1v4h-1zM139 151h1v4h-1zM140 149h1v6h-1zM141 151h1v4h-1zM142 151h1v2h-1zM143 151h1v4h-1zM144 151h1v6h-1zM145 149h1v8h-1zM146 151h1v6h-1zM147 151h1v4h-1zM148 149h1v6h-1zM149 149h1v6h-1zM150 149h1v6h-1zM151 149h1v6h-1zM152 149h1v8h-1zM153 149h1v10h-1zM154 149h1v8h-1zM155 149h1v8h-1zM156 149h1v6h-1zM157 149h1v6h-1zM158 149h1v4h-1zM159 149h1v4h-1zM160 149h1v10h-1zM161 149h1v4h-1zM162 149h1v6h-1zM163 149h1v8h-1zM164 149h1v6h-1zM165 147h1v8h-1zM166 149h1v8h-1zM167 149h1v6h-1zM168 151h1v6h-1zM169 149h1v6h-1zM170 149h1v6h-1zM171 147h1v10h-1zM172 149h1v8h-1zM173 149h1v6h-1zM174 149h1v6h-1zM175 149h1v6h-1zM176 149h1v6h-1zM177 149h1v8h-1zM178 149h1v8h-1zM179 149h1v8h-1zM180 149h1v8h-1zM181 149h1v8h-1zM182 149h1v8h-1zM183 149h1v8h-1zM184 149h1v6h-1zM185 149h1v6h-1zM186 149h1v6h-1zM187 151h1v4h-1zM188 149h1v8h-1zM189 151h1v4h-1zM190 151h1v6h-1zM191 151h1v4h-1zM192 151h1v2h-1zM193 149h1v4h-1zM194 149h1v10h-1zM195 149h1v10h-1zM196 149h1v10h-1zM197 151h1v8h-1zM198 149h1v10h-1zM199 149h1v6h-1zM200 149h1v6h-1zM201 149h1v6h-1zM202 149h1v6h-1zM203 149h1v6h-1zM204 149h1v8h-1zM205 149h1v6h-1zM206 149h1v6h-1zM207 149h1v8h-1zM208 149h1v8h-1zM209 149h1v8h-1zM210 149h1v8h-1zM211 149h1v8h-1zM212 149h1v6h-1zM213 149h1v10h-1zM214 149h1v10h-1zM215 149h1v6h-1zM216 149h1v6h-1zM217 151h1v2h-1zM218 151h1v4h-1zM219 151h1v6h-1zM220 149h1v6h-1zM221 149h1v8h-1zM222 149h1v6h-1zM223 149h1v6h-1zM224 149h1v6h-1zM225 149h1v6h-1zM226 149h1v6h-1zM227 149h1v6h-1zM228 149h1v4h-1zM229 149h1v6h-1zM230 149h1v6h-1zM231 149h1v8h-1zM232 149h1v8h-1zM233 151h1v4h-1zM234 151h1v4h-1zM235 149h1v6h-1zM236 147h1v8h-1zM237 147h1v8h-1zM238 147h1v8h-1zM239 147h1v8h-1zM240 149h1v6h-1zM241 149h1v6h-1zM242 149h1v6h-1zM243 151h1v4h-1zM244 149h1v6h-1zM245 149h1v8h-1zM246 149h1v6h-1zM247 149h1v6h-1zM248 149h1v4h-1zM249 151h1v2h-1zM250 149h1v8h-1zM251 149h1v8h-1zM252 151h1v6h-1zM253 151h1v6h-1zM254 149h1v8h-1zM255 149h1v6h-1zM256 151h1v4h-1zM257 151h1v4h-1zM258 151h1v4h-1zM259 151h1v4h-1zM260 149h1v6h-1zM261 149h1v6h-1zM262 149h1v6h-1zM263 149h1v6h-1zM264 149h1v6h-1zM265 151h1v4h-1zM266 149h1v4h-1zM267 149h1v4h-1zM268 149h1v8h-1zM269 149h1v8h-1zM270 151h1v6h-1zM271 149h1v8h-1zM272 149h1v10h-1zM273 149h1v6h-1zM274 149h1v6h-1zM275 151h1v4h-1zM276 151h1v4h-1zM277 149h1v6h-1zM278 149h1v6h-1zM279 151h1v4h-1zM280 151h1v4h-1zM281 151h1v4h-1zM282 151h1v4h-1zM283 151h1v4h-1zM284 149h1v8h-1zM285 149h1v6h-1zM286 149h1v6h-1zM287 147h1v8h-1zM288 151h1v4h-1zM289 151h1v4h-1zM290 147h1v8h-1zM291 147h1v8h-1zM292 149h1v6h-1zM293 149h1v6h-1zM294 151h1v4h-1zM295 151h1v4h-1zM296 151h1v4h-1zM297 149h1v6h-1zM298 149h1v8h-1zM299 149h1v8h-1zM300 147h1v10h-1zM301 149h1v4h-1zM302 149h1v6h-1zM303 151h1v4h-1zM304 149h1v8h-1zM305 149h1v6h-1zM306 149h1v6h-1zM307 149h1v10h-1zM308 149h1v4h-1zM309 151h1v2h-1zM310 149h1v6h-1zM311 149h1v8h-1zM312 149h1v8h-1zM313 149h1v8h-1zM314 149h1v8h-1zM315 149h1v6h-1zM316 149h1v6h-1zM317 149h1v6h-1zM318 151h1v4h-1zM319 149h1v8h-1zM320 149h1v8h-1zM321 149h1v8h-1zM322 149h1v4h-1zM323 147h1v8h-1zM324 149h1v4h-1zM325 151h1v6h-1zM326 149h1v6h-1zM327 149h1v8h-1zM328 149h1v6h-1zM329 149h1v6h-1zM330 149h1v6h-1zM331 149h1v6h-1zM332 151h1v4h-1zM333 151h1v4h-1zM334 149h1v8h-1zM335 149h1v6h-1zM336 149h1v6h-1zM337 149h1v6h-1zM338 149h1v6h-1zM339 149h1v6h-1zM340 147h1v8h-1zM341 151h1v4h-1zM342 149h1v6h-1zM343 149h1v6h-1zM344 149h1v6h-1zM345 149h1v6h-1zM346 151h1v6h-1zM347 151h1v6h-1zM348 151h1v6h-1zM349 149h1v8h-1zM350 149h1v8h-1zM351 149h1v6h-1zM352 149h1v8h-1zM353 151h1v2h-1zM354 151h1v2h-1zM355 151h1v4h-1zM356 147h1v8h-1zM357 149h1v6h-1zM358 149h1v6h-1zM359 149h1v8h-1zM360 149h1v8h-1zM361 149h1v8h-1zM362 149h1v6h-1zM363 149h1v6h-1zM364 149h1v6h-1zM365 151h1v2h-1zM366 151h1v4h-1zM367 149h1v6h-1zM368 149h1v6h-1zM369 149h1v6h-1zM370 149h1v6h-1zM371 149h1v6h-1zM372 147h1v8h-1zM373 149h1v6h-1zM374 149h1v6h-1zM375 149h1v8h-1zM376 151h1v4h-1zM377 149h1v6h-1zM378 149h1v6h-1zM379 149h1v6h-1zM380 151h1v4h-1zM381 149h1v6h-1zM382 149h1v8h-1zM383 151h1v6h-1zM384 149h1v8h-1zM385 149h1v6h-1zM386 149h1v6h-1zM387 149h1v8h-1zM388 149h1v8h-1zM389 149h1v8h-1zM390 149h1v6h-1zM391 149h1v6h-1zM392 149h1v8h-1zM393 151h1v4h-1zM394 151h1v4h-1zM395 149h1v6h-1zM396 149h1v4h-1zM397 149h1v4h-1zM398 147h1v10h-1zM399 147h1v10h-1zM400 149h1v8h-1zM401 149h1v8h-1zM402 149h1v6h-1zM403 149h1v6h-1zM404 149h1v6h-1zM405 149h1v6h-1zM406 149h1v6h-1zM407 149h1v6h-1zM408 151h1v4h-1zM409 149h1v6h-1zM410 149h1v6h-1zM411 149h1v6h-1zM412 149h1v8h-1zM413 149h1v6h-1zM414 149h1v4h-1zM415 149h1v8h-1zM416 149h1v6h-1zM417 151h1v4h-1zM418 149h1v6h-1zM419 151h1v4h-1zM420 149h1v6h-1zM421 149h1v8h-1zM422 149h1v6h-1zM423 149h1v6h-1zM424 149h1v8h-1zM425 149h1v6h-1zM426 151h1v4h-1zM427 149h1v6h-1zM428 147h1v10h-1zM429 147h1v10h-1zM430 149h1v6h-1zM431 149h1v6h-1zM432 149h1v6h-1zM433 149h1v6h-1zM434 149h1v6h-1zM435 149h1v6h-1zM436 149h1v10h-1zM437 149h1v8h-1zM438 149h1v6h-1zM439 149h1v6h-1zM440 149h1v6h-1zM441 147h1v10h-1zM442 149h1v4h-1zM443 149h1v4h-1zM444 149h1v6h-1zM445 147h1v8h-1zM446 149h1v6h-1zM447 149h1v8h-1zM448 149h1v8h-1zM449 149h1v6h-1zM450 149h1v6h-1zM451 149h1v6h-1zM452 149h1v6h-1zM453 149h1v6h-1zM454 149h1v6h-1zM455 149h1v4h-1zM456 149h1v6h-1zM457 147h1v12h-1zM458 151h1v4h-1zM459 149h1v4h-1zM460 149h1v6h-1zM461 149h1v6h-1zM462 149h1v6h-1zM463 149h1v10h-1zM464 149h1v4h-1zM465 149h1v6h-1zM466 149h1v6h-1zM467 151h1v4h-1zM468 151h1v4h-1zM469 149h1v6h-1zM470 149h1v4h-1zM471 149h1v4h-1zM472 149h1v6h-1zM473 149h1v6h-1zM474 149h1v8h-1zM475 149h1v8h-1zM476 149h1v6h-1zM477 149h1v6h-1zM478 149h1v6h-1zM479 149h1v6h-1zM480 149h1v6h-1zM481 149h1v8h-1zM482 149h1v4h-1zM483 151h1v2h-1zM484 151h1v4h-1zM485 151h1v2h-1zM486 149h1v6h-1zM487 149h1v4h-1zM488 147h1v8h-1zM489 149h1v6h-1zM490 149h1v6h-1zM491 149h1v6h-1zM492 149h1v6h-1zM493 149h1v6h-1zM494 149h1v6h-1zM495 149h1v6h-1zM496 149h1v6h-1zM497 149h1v6h-1zM498 149h1v6h-1zM499 149h1v6h-1zM500 147h1v8h-1zM501 149h1v6h-1zM502 149h1v8h-1zM503 149h1v6h-1zM504 149h1v6h-1zM505 149h1v8h-1zM506 149h1v8h-1zM507 149h1v8h-1zM508 149h1v8h-1zM509 149h1v8h-1zM510 149h1v6h-1zM511 151h1v2h-1zM512 149h1v4h-1zM513 149h1v8h-1zM514 149h1v6h-1zM515 147h1v8h-1zM516 147h1v8h-1zM517 151h1v4h-1zM518 151h1v4h-1zM519 149h1v6h-1zM520 151h1v6h-1zM521 151h1v6h-1zM522 151h1v6h-1zM523 149h1v6h-1zM524 151h1v4h-1zM525 149h1v8h-1zM526 149h1v8h-1zM527 149h1v4h-1zM528 149h1v6h-1zM529 149h1v8h-1zM530 149h1v8h-1zM531 149h1v6h-1zM532 149h1v8h-1zM533 149h1v8h-1zM534 149h1v4h-1zM535 147h1v8h-1zM536 151h1v2h-1zM537 149h1v8h-1zM538 149h1v8h-1zM539 149h1v6h-1zM540 151h1v4h-1zM541 151h1v4h-1zM542 149h1v6h-1zM543 149h1v6h-1zM544 149h1v6h-1zM545 149h1v6h-1zM546 149h1v6h-1zM547 149h1v6h-1zM548 149h1v6h-1zM549 149h1v6h-1zM550 149h1v8h-1zM551 149h1v8h-1zM552 149h1v8h-1zM553 149h1v6h-1zM554 149h1v6h-1zM555 149h1v6h-1zM556 149h1v6h-1zM557 149h1v6h-1zM558 149h1v6h-1zM559 151h1v4h-1zM560 147h1v10h-1zM561 149h1v6h-1zM562 149h1v6h-1zM563 149h1v8h-1zM564 149h1v8h-1zM565 149h1v6h-1zM566 149h1v6h-1zM567 149h1v6h-1zM568 149h1v8h-1zM569 149h1v6h-1zM570 151h1v2h-1zM571 151h1v2h-1zM572 151h1v2h-1zM573 151h1v4h-1zM574 149h1v6h-1zM575 149h1v6h-1zM576 149h1v6h-1zM577 149h1v8h-1zM578 149h1v6h-1zM579 149h1v6h-1zM580 147h1v12h-1zM581 149h1v10h-1zM582 149h1v6h-1zM583 149h1v8h-1zM584 149h1v6h-1zM585 151h1v4h-1zM586 147h1v8h-1zM587 149h1v6h-1zM588 151h1v4h-1zM589 147h1v8h-1zM590 151h1v6h-1zM591 149h1v6h-1zM592 149h1v6h-1zM593 149h1v8h-1zM594 149h1v6h-1zM595 149h1v8h-1zM596 149h1v6h-1zM597 149h1v6h-1zM598 149h1v6h-1zM599 149h1v6h-1zM600 149h1v6h-1zM601 149h1v6h-1zM602 149h1v6h-1zM603 149h1v6h-1zM604 149h1v6h-1zM605 149h1v8h-1zM606 151h1v2h-1zM607 151h1v4h-1zM608 151h1v4h-1zM609 149h1v6h-1zM610 149h1v6h-1zM611 149h1v6h-1zM612 147h1v10h-1zM613 149h1v6h-1zM614 149h1v6h-1zM615 149h1v6h-1zM616 149h1v6h-1zM617 151h1v4h-1zM618 151h1v4h-1zM619 151h1v4h-1zM620 147h1v8h-1zM621 149h1v6h-1zM622 149h1v6h-1zM623 149h1v6h-1zM624 151h1v4h-1zM625 149h1v6h-1zM626 147h1v8h-1zM627 149h1v8h-1zM628 149h1v6h-1zM629 149h1v6h-1zM630 149h1v6h-1zM631 147h1v10h-1zM632 149h1v8h-1zM633 147h1v8h-1zM634 149h1v8h-1zM635 149h1v6h-1zM636 149h1v6h-1zM637 149h1v6h-1zM638 149h1v6h-1zM639 149h1v6h-1zM640 149h1v6h-1zM641 151h1v4h-1zM642 151h1v4h-1zM643 151h1v6h-1zM644 151h1v4h-1zM645 151h1v2h-1zM646 151h1v6h-1zM647 151h1v6h-1zM648 149h1v8h-1zM649 149h1v8h-1zM650 149h1v6h-1zM651 149h1v8h-1zM652 149h1v8h-1zM653 149h1v6h-1zM654 149h1v6h-1zM655 149h1v6h-1z" fill="#00ff00"/>
  <path d="M656 120.5L642.8 128.5L656 136.5Z" fill="#ffff00" shape-rendering="auto"/>
  <!-- right panel -->
  <rect x="656" y="0" width="144" height="480" fill="#b8b0b8"/>
  <rect x="657" y="1" width="143" height="479" fill="#777777"/>
  <rect x="657" y="1" width="143" height="27" fill="#40443e"/>
  <!-- CH4 marker -->
  <path d="M0 232H9L15.5 239L9 246H0Z" fill="#00ff00" shape-rendering="auto"/>
  <!-- trigger marker -->
  <!-- timebase marker -->
  <path d="M300 29H370.5V42L367.5 45H341L335.5 51.5L330 45H303L300 42Z" fill="#4466fc" shape-rendering="auto"/>
  <path d="M300.5 29V41.8L303.3 44.5H330.2L335.5 50.8L340.8 44.5H367.3L370 41.8V29" fill="none" stroke="#98d0ff" stroke-width="1" shape-rendering="auto"/>
  <!-- logo -->
  <path d="M16 21h5v1h-5zM24 21h5v1h-5zM30 21h20v1h-20zM53 21h5v1h-5zM59 21h29v1h-29zM90 21h6v1h-6zM16 6h5v1h-5zM24 6h5v1h-5zM59 6h5v1h-5zM83 6h5v1h-5zM16 16h1v1h-1zM20 16h5v1h-5zM28 16h1v1h-1zM30 16h1v1h-1zM43 16h1v1h-1zM49 16h1v1h-1zM53 16h1v1h-1zM57 16h1v1h-1zM59 16h1v1h-1zM63 16h1v1h-1zM68 16h1v1h-1zM82 16h2v1h-2zM91 16h2v1h-2zM16 9h1v1h-1zM20 9h1v1h-1zM24 9h1v1h-1zM28 9h1v1h-1zM30 9h28v1h-28zM59 9h1v1h-1zM63 9h21v1h-21zM87 9h1v1h-1zM90 9h6v1h-6zM16 12h1v1h-1zM28 12h1v1h-1zM30 12h1v1h-1zM35 12h5v1h-5zM43 12h1v1h-1zM57 12h1v1h-1zM59 12h1v1h-1zM67 12h2v1h-2zM72 12h6v1h-6zM82 12h2v1h-2zM87 12h2v1h-2zM93 12h2v1h-2zM16 18h1v1h-1zM20 18h1v1h-1zM24 18h1v1h-1zM28 18h1v1h-1zM30 18h1v1h-1zM35 18h4v1h-4zM43 18h1v1h-1zM49 18h1v1h-1zM53 18h1v1h-1zM57 18h1v1h-1zM59 18h1v1h-1zM67 18h2v1h-2zM87 18h2v1h-2zM93 18h2v1h-2zM16 17h1v1h-1zM20 17h1v1h-1zM24 17h1v1h-1zM28 17h1v1h-1zM30 17h1v1h-1zM35 17h4v1h-4zM43 17h1v1h-1zM49 17h1v1h-1zM53 17h1v1h-1zM57 17h1v1h-1zM59 17h1v1h-1zM63 17h6v1h-6zM72 17h12v1h-12zM87 17h1v1h-1zM92 17h2v1h-2zM16 13h1v1h-1zM28 13h1v1h-1zM30 13h1v1h-1zM35 13h1v1h-1zM39 13h1v1h-1zM43 13h1v1h-1zM49 13h5v1h-5zM57 13h1v1h-1zM59 13h1v1h-1zM63 13h6v1h-6zM72 13h6v1h-6zM82 13h2v1h-2zM87 13h1v1h-1zM92 13h2v1h-2zM16 10h1v1h-1zM20 10h1v1h-1zM24 10h1v1h-1zM28 10h1v1h-1zM30 10h1v1h-1zM43 10h1v1h-1zM57 10h1v1h-1zM59 10h1v1h-1zM67 10h2v1h-2zM82 10h2v1h-2zM87 10h1v1h-1zM89 10h2v1h-2zM95 10h1v1h-1zM16 15h1v1h-1zM28 15h1v1h-1zM30 15h1v1h-1zM43 15h1v1h-1zM49 15h1v1h-1zM53 15h1v1h-1zM57 15h1v1h-1zM59 15h1v1h-1zM63 15h1v1h-1zM68 15h1v1h-1zM82 15h2v1h-2zM90 15h2v1h-2zM16 7h1v1h-1zM20 7h1v1h-1zM24 7h1v1h-1zM28 7h1v1h-1zM59 7h1v1h-1zM63 7h1v1h-1zM83 7h1v1h-1zM87 7h1v1h-1zM16 20h1v1h-1zM20 20h1v1h-1zM24 20h1v1h-1zM28 20h1v1h-1zM30 20h1v1h-1zM49 20h1v1h-1zM53 20h1v1h-1zM57 20h1v1h-1zM59 20h1v1h-1zM67 20h2v1h-2zM87 20h1v1h-1zM89 20h2v1h-2zM95 20h1v1h-1zM16 11h1v1h-1zM20 11h5v1h-5zM28 11h1v1h-1zM30 11h1v1h-1zM43 11h1v1h-1zM57 11h1v1h-1zM59 11h1v1h-1zM67 11h2v1h-2zM82 11h2v1h-2zM87 11h3v1h-3zM94 11h2v1h-2zM16 14h1v1h-1zM28 14h1v1h-1zM30 14h10v1h-10zM43 14h1v1h-1zM49 14h1v1h-1zM53 14h1v1h-1zM57 14h1v1h-1zM59 14h1v1h-1zM63 14h1v1h-1zM68 14h1v1h-1zM82 14h2v1h-2zM91 14h2v1h-2zM16 8h1v1h-1zM20 8h1v1h-1zM24 8h1v1h-1zM28 8h1v1h-1zM59 8h1v1h-1zM63 8h1v1h-1zM83 8h1v1h-1zM87 8h1v1h-1zM16 19h1v1h-1zM20 19h1v1h-1zM24 19h1v1h-1zM28 19h1v1h-1zM30 19h1v1h-1zM49 19h1v1h-1zM53 19h1v1h-1zM57 19h1v1h-1zM59 19h1v1h-1zM67 19h2v1h-2zM87 19h3v1h-3zM94 19h2v1h-2z" fill="#44465a"/><path d="M17 17h3v1h-3zM25 17h3v1h-3zM31 17h4v1h-4zM39 17h4v1h-4zM44 17h5v1h-5zM54 17h3v1h-3zM60 17h3v1h-3zM69 17h3v1h-3zM84 17h3v1h-3zM88 17h4v1h-4zM17 20h3v1h-3zM25 20h3v1h-3zM31 20h18v1h-18zM54 20h3v1h-3zM60 20h7v1h-7zM69 20h18v1h-18zM91 20h4v1h-4zM17 13h11v1h-11zM31 13h4v1h-4zM40 13h3v1h-3zM44 13h5v1h-5zM54 13h3v1h-3zM60 13h3v1h-3zM69 13h3v1h-3zM78 13h4v1h-4zM84 13h3v1h-3zM88 13h4v1h-4zM17 9h3v1h-3zM25 9h3v1h-3zM60 9h3v1h-3zM84 9h3v1h-3zM17 11h3v1h-3zM25 11h3v1h-3zM31 11h12v1h-12zM44 11h13v1h-13zM60 11h7v1h-7zM69 11h13v1h-13zM84 11h3v1h-3zM90 11h4v1h-4zM17 10h3v1h-3zM25 10h3v1h-3zM31 10h12v1h-12zM44 10h13v1h-13zM60 10h7v1h-7zM69 10h13v1h-13zM84 10h3v1h-3zM91 10h4v1h-4zM17 18h3v1h-3zM25 18h3v1h-3zM31 18h4v1h-4zM39 18h4v1h-4zM44 18h5v1h-5zM54 18h3v1h-3zM60 18h7v1h-7zM69 18h18v1h-18zM89 18h4v1h-4zM17 19h3v1h-3zM25 19h3v1h-3zM31 19h18v1h-18zM54 19h3v1h-3zM60 19h7v1h-7zM69 19h18v1h-18zM90 19h4v1h-4zM17 15h11v1h-11zM31 15h12v1h-12zM44 15h5v1h-5zM54 15h3v1h-3zM60 15h3v1h-3zM69 15h13v1h-13zM84 15h6v1h-6zM17 12h11v1h-11zM31 12h4v1h-4zM40 12h3v1h-3zM44 12h13v1h-13zM60 12h7v1h-7zM69 12h3v1h-3zM78 12h4v1h-4zM84 12h3v1h-3zM89 12h4v1h-4zM17 7h3v1h-3zM25 7h3v1h-3zM60 7h3v1h-3zM84 7h3v1h-3zM17 16h3v1h-3zM25 16h3v1h-3zM31 16h12v1h-12zM44 16h5v1h-5zM54 16h3v1h-3zM60 16h3v1h-3zM69 16h13v1h-13zM84 16h7v1h-7zM17 8h3v1h-3zM25 8h3v1h-3zM60 8h3v1h-3zM84 8h3v1h-3zM17 14h11v1h-11zM40 14h3v1h-3zM44 14h5v1h-5zM54 14h3v1h-3zM60 14h3v1h-3zM69 14h13v1h-13zM84 14h7v1h-7z" fill="#ffff00"/>
  <!-- header icons -->
  <rect x="115" y="3" width="23" height="21" fill="#a8a8a8"/>
  <rect x="116" y="4" width="21" height="19" fill="#000"/>
  <path d="M116 8.5 C117.5 5 118.5 5.5 120 5.5 C122 5.5 123.5 12 126 12 C128.5 12 129.5 5.5 131.5 5.5 C133.5 5.5 135 11 137 10" fill="none" stroke="#ffff00" stroke-width="2" shape-rendering="auto"/>
  <path d="M116 17.5 C117.5 14.5 118.5 14.5 120 14.5 C122 14.5 123.5 21 126 21 C128.5 21 129.5 14.5 131.5 14.5 C133.5 14.5 135 20.5 137 19.5" fill="none" stroke="#00ffff" stroke-width="2" shape-rendering="auto"/>
  <rect x="140" y="3" width="23" height="21" fill="#a8a8a8"/>
  <rect x="141" y="4" width="21" height="19" fill="#000"/>
  <path d="M144 20.5L158.5 6" stroke="#00ff00" stroke-width="2.2" stroke-linecap="round" shape-rendering="auto"/>
  <rect x="165" y="3" width="23" height="21" fill="#a8a8a8"/>
  <rect x="166" y="4" width="21" height="19" fill="#000"/>
  <g shape-rendering="auto" opacity="0.85">
    <rect x="168.5" y="13" width="10.5" height="9" rx="2" fill="#8a8a8a"/>
    <rect x="173.5" y="5" width="10" height="10" rx="2.5" fill="#9a9a9a"/>
    <rect x="170.5" y="11" width="6" height="10" fill="#a0a0a0"/>
    <rect x="176" y="6" width="5" height="8" fill="#b0b0b0"/>
  </g>
  <path d="M190.5 24V5.5Q190.5 2.5 193.5 2.5H233" fill="none" stroke="#2e2a30" stroke-width="1" shape-rendering="auto"/>
  <!-- pulse icon -->
  <path d="M245 5h1v17h-1zM247 6h1v16h-1zM245 5h11v1h-11zM254 6h1v16h-1zM256 5h1v17h-1zM247 3h1v5h-1zM249 3h1v5h-1zM251 3h1v5h-1zM253 3h1v5h-1zM256 21h7v1h-7zM257 18h1v4h-1zM259 18h1v4h-1zM261 18h1v4h-1zM241 21h5v1h-5zM241 20h1v2h-1zM243 17h1v6h-1z" fill="#d0ffff"/>
  <!-- T -->
  <path d="M268 4H282V8H277.3V22H272.7V8H268Z" fill="#00e800"/>
  <!-- key -->
  <path d="M290 13H305V16H300V19H298V16H296V19H294V16H290Z" fill="#3c3e3a"/>
  <ellipse cx="309" cy="14.5" rx="4" ry="4.5" fill="none" stroke="#3c3e3a" stroke-width="2.5" shape-rendering="auto"/>
  <!-- floppy -->
  <path d="M315.5 3.5H335.5V22.5H318.5L315.5 19.5Z" fill="none" stroke="#b8e0f0" stroke-width="1.2"/>
  <path d="M316.5 5V19" stroke="#6050d8" stroke-width="1"/>
  <path d="M319.5 4V12.5H333V4" fill="none" stroke="#c0c0f8" stroke-width="1.2"/>
  <path d="M321.5 5V11" stroke="#4030c0" stroke-width="1.2"/>
  <path d="M321 22.5V15.5H331V22.5" fill="none" stroke="#c8d0f8" stroke-width="1"/>
  <rect x="325" y="16" width="5.5" height="6" fill="#d0ffff"/>
  <rect x="323" y="16.5" width="1.6" height="5" fill="#3020b0"/>
  <path d="M334.5 5V21.5" stroke="#6050d8" stroke-width="1"/>
  <!-- printer -->
  <path d="M345 4H358V13H345Z" fill="none" stroke="#3c3e3a" stroke-width="2"/>
  <path d="M347 7H356M347 10H356" stroke="#3c3e3a" stroke-width="1"/>
  <path d="M342 14H362V23H342Z" fill="none" stroke="#3c3e3a" stroke-width="2"/>
  <rect x="366" y="1" width="1.5" height="26" fill="#181818"/>
  <!-- memory depth -->
  <rect x="393" y="3" width="115" height="22" fill="#6060a0"/>
  <rect x="394" y="4" width="113" height="20" fill="#000"/>
  <path d="M395.00,14.00 L395.25,12.29 L395.50,10.79 L395.75,9.67 L396.00,9.08 L396.25,9.08 L396.50,9.67 L396.75,10.79 L397.00,12.29 L397.25,14.00 L397.50,15.71 L397.75,17.21 L398.00,18.33 L398.25,18.92 L398.50,18.92 L398.75,18.33 L399.00,17.21 L399.25,15.71 L399.50,14.00 L399.75,12.29 L400.00,10.79 L400.25,9.67 L400.50,9.08 L400.75,9.08 L401.00,9.67 L401.25,10.79 L401.50,12.29 L401.75,14.00 L402.00,15.71 L402.25,17.21 L402.50,18.33 L402.75,18.92 L403.00,18.92 M497.00,14.00 L497.25,12.29 L497.50,10.79 L497.75,9.67 L498.00,9.08 L498.25,9.08 L498.50,9.67 L498.75,10.79 L499.00,12.29 L499.25,14.00 L499.50,15.71 L499.75,17.21 L500.00,18.33 L500.25,18.92 L500.50,18.92 L500.75,18.33 L501.00,17.21 L501.25,15.71 L501.50,14.00 L501.75,12.29 L502.00,10.79 L502.25,9.67 L502.50,9.08 L502.75,9.08 L503.00,9.67 L503.25,10.79 L503.50,12.29 L503.75,14.00 L504.00,15.71 L504.25,17.21 L504.50,18.33 L504.75,18.92 L505.00,18.92 L505.25,18.33 L505.50,17.21 L505.75,15.71 L506.00,14.00" fill="none" stroke="#0a5050" stroke-width="1" shape-rendering="auto"/>
  <rect x="404" y="3" width="92" height="22" fill="#f06020"/>
  <rect x="406" y="5" width="88" height="18" fill="#000"/>
  <path id="sw" d="M406.00,9.93 L406.25,8.98 L406.50,8.18 L406.75,7.54 L407.00,7.10 L407.25,6.85 L407.50,6.81 L407.75,6.98 L408.00,7.35 L408.25,7.92 L408.50,8.67 L408.75,9.57 L409.00,10.59 L409.25,11.72 L409.50,12.92 L409.75,14.14 L410.00,15.36 L410.25,16.54 L410.50,17.65 L410.75,18.65 L411.00,19.52 L411.25,20.22 L411.50,20.75 L411.75,21.08 L412.00,21.20 L412.25,21.11 L412.50,20.82 L412.75,20.33 L413.00,19.65 L413.25,18.81 L413.50,17.83 L413.75,16.74 L414.00,15.57 L414.25,14.35 L414.50,13.12 L414.75,11.92 L415.00,10.78 L415.25,9.73 L415.50,8.81 L415.75,8.04 L416.00,7.44 L416.25,7.03 L416.50,6.82 L416.75,6.83 L417.00,7.04 L417.25,7.45 L417.50,8.06 L417.75,8.83 L418.00,9.76 L418.25,10.81 L418.50,11.96 L418.75,13.16 L419.00,14.39 L419.25,15.60 L419.50,16.77 L419.75,17.86 L420.00,18.84 L420.25,19.67 L420.50,20.34 L420.75,20.83 L421.00,21.12 L421.25,21.20 L421.50,21.07 L421.75,20.74 L422.00,20.21 L422.25,19.50 L422.50,18.63 L422.75,17.62 L423.00,16.51 L423.25,15.33 L423.50,14.11 L423.75,12.88 L424.00,11.69 L424.25,10.56 L424.50,9.54 L424.75,8.64 L425.00,7.90 L425.25,7.34 L425.50,6.97 L425.75,6.81 L426.00,6.85 L426.25,7.11 L426.50,7.56 L426.75,8.20 L427.00,9.01 L427.25,9.96 L427.50,11.04 L427.75,12.19 L428.00,13.40 L428.25,14.63 L428.50,15.84 L428.75,17.00 L429.00,18.07 L429.25,19.02 L429.50,19.82 L429.75,20.46 L430.00,20.90 L430.25,21.15 L430.50,21.19 L430.75,21.02 L431.00,20.65 L431.25,20.08 L431.50,19.33 L431.75,18.43 L432.00,17.41 L432.25,16.28 L432.50,15.08 L432.75,13.86 L433.00,12.64 L433.25,11.46 L433.50,10.35 L433.75,9.35 L434.00,8.48 L434.25,7.78 L434.50,7.25 L434.75,6.92 L435.00,6.80 L435.25,6.89 L435.50,7.18 L435.75,7.67 L436.00,8.35 L436.25,9.19 L436.50,10.17 L436.75,11.26 L437.00,12.43 L437.25,13.65 L437.50,14.88 L437.75,16.08 L438.00,17.22 L438.25,18.27 L438.50,19.19 L438.75,19.96 L439.00,20.56 L439.25,20.97 L439.50,21.18 L439.75,21.17 L440.00,20.96 L440.25,20.55 L440.50,19.94 L440.75,19.17 L441.00,18.24 L441.25,17.19 L441.50,16.04 L441.75,14.84 L442.00,13.61 L442.25,12.40 L442.50,11.23 L442.75,10.14 L443.00,9.16 L443.25,8.33 L443.50,7.66 L443.75,7.17 L444.00,6.88 L444.25,6.80 L444.50,6.93 L444.75,7.26 L445.00,7.79 L445.25,8.50 L445.50,9.37 L445.75,10.38 L446.00,11.49 L446.25,12.67 L446.50,13.89 L446.75,15.12 L447.00,16.31 L447.25,17.44 L447.50,18.46 L447.75,19.36 L448.00,20.10 L448.25,20.66 L448.50,21.03 L448.75,21.19 L449.00,21.15 L449.25,20.89 L449.50,20.44 L449.75,19.80 L450.00,18.99 L450.25,18.04 L450.50,16.96 L450.75,15.81 L451.00,14.60 L451.25,13.37 L451.50,12.16 L451.75,11.00 L452.00,9.93 L452.25,8.98 L452.50,8.18 L452.75,7.54 L453.00,7.10 L453.25,6.85 L453.50,6.81 L453.75,6.98 L454.00,7.35 L454.25,7.92 L454.50,8.67 L454.75,9.57 L455.00,10.59 L455.25,11.72 L455.50,12.92 L455.75,14.14 L456.00,15.36 L456.25,16.54 L456.50,17.65 L456.75,18.65 L457.00,19.52 L457.25,20.22 L457.50,20.75 L457.75,21.08 L458.00,21.20 L458.25,21.11 L458.50,20.82 L458.75,20.33 L459.00,19.65 L459.25,18.81 L459.50,17.83 L459.75,16.74 L460.00,15.57 L460.25,14.35 L460.50,13.12 L460.75,11.92 L461.00,10.78 L461.25,9.73 L461.50,8.81 L461.75,8.04 L462.00,7.44 L462.25,7.03 L462.50,6.82 L462.75,6.83 L463.00,7.04 L463.25,7.45 L463.50,8.06 L463.75,8.83 L464.00,9.76 L464.25,10.81 L464.50,11.96 L464.75,13.16 L465.00,14.39 L465.25,15.60 L465.50,16.77 L465.75,17.86 L466.00,18.84 L466.25,19.67 L466.50,20.34 L466.75,20.83 L467.00,21.12 L467.25,21.20 L467.50,21.07 L467.75,20.74 L468.00,20.21 L468.25,19.50 L468.50,18.63 L468.75,17.62 L469.00,16.51 L469.25,15.33 L469.50,14.11 L469.75,12.88 L470.00,11.69 L470.25,10.56 L470.50,9.54 L470.75,8.64 L471.00,7.90 L471.25,7.34 L471.50,6.97 L471.75,6.81 L472.00,6.85 L472.25,7.11 L472.50,7.56 L472.75,8.20 L473.00,9.01 L473.25,9.96 L473.50,11.04 L473.75,12.19 L474.00,13.40 L474.25,14.63 L474.50,15.84 L474.75,17.00 L475.00,18.07 L475.25,19.02 L475.50,19.82 L475.75,20.46 L476.00,20.90 L476.25,21.15 L476.50,21.19 L476.75,21.02 L477.00,20.65 L477.25,20.08 L477.50,19.33 L477.75,18.43 L478.00,17.41 L478.25,16.28 L478.50,15.08 L478.75,13.86 L479.00,12.64 L479.25,11.46 L479.50,10.35 L479.75,9.35 L480.00,8.48 L480.25,7.78 L480.50,7.25 L480.75,6.92 L481.00,6.80 L481.25,6.89 L481.50,7.18 L481.75,7.67 L482.00,8.35 L482.25,9.19 L482.50,10.17 L482.75,11.26 L483.00,12.43 L483.25,13.65 L483.50,14.88 L483.75,16.08 L484.00,17.22 L484.25,18.27 L484.50,19.19 L484.75,19.96 L485.00,20.56 L485.25,20.97 L485.50,21.18 L485.75,21.17 L486.00,20.96 L486.25,20.55 L486.50,19.94 L486.75,19.17 L487.00,18.24 L487.25,17.19 L487.50,16.04 L487.75,14.84 L488.00,13.61 L488.25,12.40 L488.50,11.23 L488.75,10.14 L489.00,9.16 L489.25,8.33 L489.50,7.66 L489.75,7.17 L490.00,6.88 L490.25,6.80 L490.50,6.93 L490.75,7.26 L491.00,7.79 L491.25,8.50 L491.50,9.37 L491.75,10.38 L492.00,11.49 L492.25,12.67 L492.50,13.89 L492.75,15.12 L493.00,16.31 L493.25,17.44 L493.50,18.46 L493.75,19.36 L494.00,20.10" fill="none" stroke="#00e8ff" stroke-width="2" shape-rendering="auto"/>
  <!-- W box -->
  <rect x="521" y="3" width="22" height="22" fill="#a8a8a8"/>
  <rect x="522" y="4" width="20" height="20" fill="#000"/>
</svg>

<div class="pill" style="left:547px;top:3px;width:100px;height:21px;border-radius:6px;"></div>
<div class="a" style="left:777px;top:3px;width:21px;height:21px;background:#ff3000;"></div>
<div class="t" style="left:0;top:232px;width:11px;text-align:center;color:#2a3cf0;font-size:14px;font-weight:bold;">4</div>
<div class="btn" style="top:64px;height:41px;"></div>
<div class="btn" style="top:145px;height:41px;"></div>
<div class="btn" style="top:221px;height:41px;"></div>
<div class="btn" style="top:305px;height:41px;"></div>
<div class="btn" style="left:678px;width:98px;top:448px;height:23px;"></div>
<div class="pill" style="left:48px;top:453px;width:62px;height:22px;"></div>
<div class="pill" style="left:148px;top:453px;width:62px;height:22px;"></div>
<div class="pill" style="left:248px;top:453px;width:62px;height:22px;"></div>
<div class="pill" style="left:348px;top:453px;width:62px;height:22px;"></div>
<div class="pill" style="left:473px;top:453px;width:70px;height:22px;"></div>
<div class="pill" style="left:550px;top:453px;width:100px;height:22px;"></div>
<svg width="800" height="480" style="font-family:'Liberation Sans',sans-serif;">
<path d="M781.5 6.5L793.5 19.5M793.5 6.5L781.5 19.5" stroke="#fff" stroke-width="2.6"/>
<path d="M453 456H459L466 471H471" fill="none" stroke="#80c0ff" stroke-width="2"/>
<text x="522.2" y="20.6" font-size="19" font-weight="bold" fill="#d8ffff" textLength="18" lengthAdjust="spacingAndGlyphs">W</text>
<text x="14.99" y="470.00" font-size="17.4" fill="#ffff00" stroke="#545652" stroke-width="0.35" textLength="29.99" lengthAdjust="spacingAndGlyphs" >CH1</text>
<text x="59.55" y="472.00" font-size="17.0" fill="#ffff00" stroke="#000000" stroke-width="0.35" textLength="39.62" lengthAdjust="spacingAndGlyphs" >1.00V</text>
<text x="114.91" y="470.00" font-size="17.4" fill="#00ffff" stroke="#545652" stroke-width="0.35" textLength="33.18" lengthAdjust="spacingAndGlyphs" >CH2</text>
<text x="159.55" y="472.00" font-size="17.0" fill="#00ffff" stroke="#000000" stroke-width="0.35" textLength="39.62" lengthAdjust="spacingAndGlyphs" >1.00V</text>
<text x="214.92" y="470.00" font-size="17.4" fill="#ff2010" stroke="#545652" stroke-width="0.35" textLength="32.80" lengthAdjust="spacingAndGlyphs" >CH3</text>
<text x="259.55" y="472.00" font-size="17.0" fill="#ff2010" stroke="#000000" stroke-width="0.35" textLength="39.62" lengthAdjust="spacingAndGlyphs" >1.00V</text>
<text x="314.92" y="470.00" font-size="17.4" fill="#00ff00" stroke="#545652" stroke-width="0.35" textLength="32.55" lengthAdjust="spacingAndGlyphs" >CH4</text>
<text x="359.55" y="472.00" font-size="17.0" fill="#00ff00" stroke="#000000" stroke-width="0.35" textLength="39.62" lengthAdjust="spacingAndGlyphs" >1.00V</text>
<text x="417.99" y="470.00" font-size="17.4" fill="#ffff00" stroke="#545652" stroke-width="0.35" textLength="29.99" lengthAdjust="spacingAndGlyphs" >CH1</text>
<text x="487.31" y="470.00" font-size="17.0" fill="#ffff00" stroke="#000000" stroke-width="0.35" textLength="40.85" lengthAdjust="spacingAndGlyphs" >2.20V</text>
<text x="562.81" y="470.00" font-size="17.0" fill="#ffff00" stroke="#000000" stroke-width="0.35" textLength="75.47" lengthAdjust="spacingAndGlyphs" >10.0000Hz</text>
<text x="568.87" y="20.70" font-size="18.4" fill="#ffffff" stroke="#000000" stroke-width="0.35" textLength="54.73" lengthAdjust="spacingAndGlyphs" >8.00ms</text>
<text x="311.89" y="43.00" font-size="16.7" fill="#ffffff" textLength="46.67" lengthAdjust="spacingAndGlyphs" >0.000s</text>
<text x="677.90" y="20.30" font-size="21.0" fill="#ffffff" textLength="77.15" lengthAdjust="spacingAndGlyphs" >UTILITY</text>
<text x="698.70" y="84.30" font-size="18.2" fill="#ffffff" stroke="#777777" stroke-width="0.35" textLength="58.97" lengthAdjust="spacingAndGlyphs" >System</text>
<text x="700.64" y="102.00" font-size="18.2" fill="#ffffff" stroke="#777777" stroke-width="0.35" textLength="53.54" lengthAdjust="spacingAndGlyphs" >Status</text>
<text x="699.15" y="164.50" font-size="18.2" fill="#ffffff" stroke="#777777" stroke-width="0.35" textLength="56.64" lengthAdjust="spacingAndGlyphs" >Update</text>
<text x="691.58" y="183.00" font-size="18.2" fill="#ffffff" stroke="#777777" stroke-width="0.35" textLength="72.19" lengthAdjust="spacingAndGlyphs" >Firmware</text>
<text x="709.25" y="241.00" font-size="18.2" fill="#ffffff" stroke="#777777" stroke-width="0.35" textLength="37.89" lengthAdjust="spacingAndGlyphs" >Save</text>
<text x="689.73" y="259.00" font-size="18.2" fill="#ffffff" stroke="#777777" stroke-width="0.35" textLength="76.58" lengthAdjust="spacingAndGlyphs" >Waveform</text>
<text x="681.52" y="332.60" font-size="18.2" fill="#ffffff" stroke="#777777" stroke-width="0.35" textLength="91.44" lengthAdjust="spacingAndGlyphs" >Do Self Cal</text>
<text x="691.33" y="466.80" font-size="18.3" fill="#ffffff" stroke="#777777" stroke-width="0.35" textLength="71.90" lengthAdjust="spacingAndGlyphs" >Page 1/4</text>
</svg>
</body></html>
